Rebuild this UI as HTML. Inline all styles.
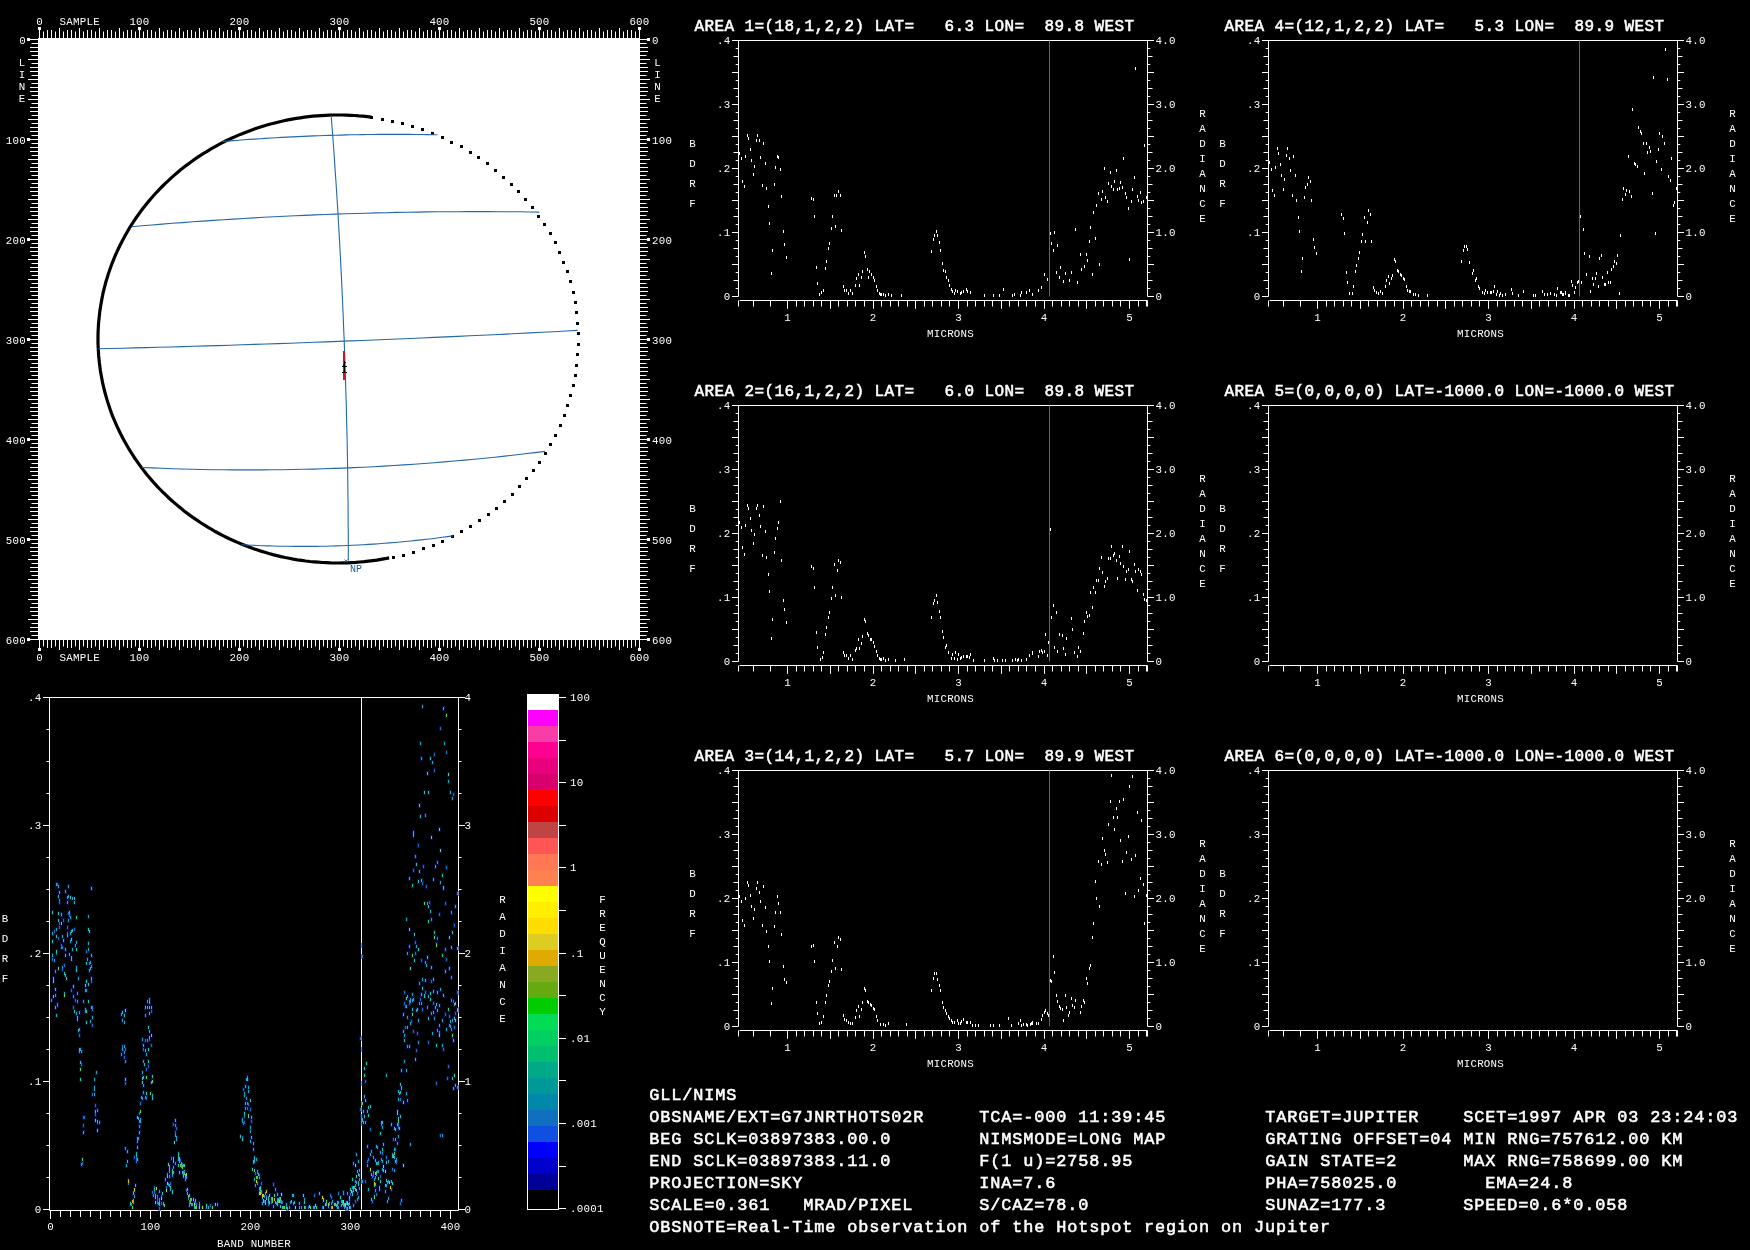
<!DOCTYPE html><html><head><meta charset="utf-8"><style>html,body{margin:0;padding:0;background:#000;overflow:hidden}
svg{display:block;will-change:transform}
text{font-family:"Liberation Mono",monospace;fill:#fff;white-space:pre}
.s{font-size:10.8px;letter-spacing:0.25px}
.np{font-size:10px}
.t{font-size:16px;letter-spacing:0.4px;stroke:#fff;stroke-width:0.55px}
.b{font-size:16.9px;letter-spacing:0.86px;stroke:#fff;stroke-width:0.55px}
</style></head><body>
<svg width="1750" height="1250" viewBox="0 0 1750 1250">
<rect width="1750" height="1250" fill="#000"/>
<rect x="38" y="38" width="602" height="602" fill="#fff"/>
<path d="M39.5 38V28 M39.5 640V650 M38 39.5H28 M640 39.5H650 M43.5 38V31.5 M43.5 640V646.5 M38 43.5H31.5 M640 43.5H646.5 M47.5 38V30 M47.5 640V648 M38 47.5H30 M640 47.5H648 M51.5 38V30 M51.5 640V648 M38 51.5H30 M640 51.5H648 M55.5 38V31.5 M55.5 640V646.5 M38 55.5H31.5 M640 55.5H646.5 M59.5 38V28 M59.5 640V650 M38 59.5H28 M640 59.5H650 M63.5 38V31.5 M63.5 640V646.5 M38 63.5H31.5 M640 63.5H646.5 M67.5 38V30 M67.5 640V648 M38 67.5H30 M640 67.5H648 M71.5 38V30 M71.5 640V648 M38 71.5H30 M640 71.5H648 M75.5 38V31.5 M75.5 640V646.5 M38 75.5H31.5 M640 75.5H646.5 M79.5 38V28 M79.5 640V650 M38 79.5H28 M640 79.5H650 M83.5 38V31.5 M83.5 640V646.5 M38 83.5H31.5 M640 83.5H646.5 M87.5 38V30 M87.5 640V648 M38 87.5H30 M640 87.5H648 M91.5 38V30 M91.5 640V648 M38 91.5H30 M640 91.5H648 M95.5 38V31.5 M95.5 640V646.5 M38 95.5H31.5 M640 95.5H646.5 M99.5 38V28 M99.5 640V650 M38 99.5H28 M640 99.5H650 M103.5 38V31.5 M103.5 640V646.5 M38 103.5H31.5 M640 103.5H646.5 M107.5 38V30 M107.5 640V648 M38 107.5H30 M640 107.5H648 M111.5 38V30 M111.5 640V648 M38 111.5H30 M640 111.5H648 M115.5 38V31.5 M115.5 640V646.5 M38 115.5H31.5 M640 115.5H646.5 M119.5 38V28 M119.5 640V650 M38 119.5H28 M640 119.5H650 M123.5 38V31.5 M123.5 640V646.5 M38 123.5H31.5 M640 123.5H646.5 M127.5 38V30 M127.5 640V648 M38 127.5H30 M640 127.5H648 M131.5 38V30 M131.5 640V648 M38 131.5H30 M640 131.5H648 M135.5 38V31.5 M135.5 640V646.5 M38 135.5H31.5 M640 135.5H646.5 M139.5 38V28 M139.5 640V650 M38 139.5H28 M640 139.5H650 M143.5 38V31.5 M143.5 640V646.5 M38 143.5H31.5 M640 143.5H646.5 M147.5 38V30 M147.5 640V648 M38 147.5H30 M640 147.5H648 M151.5 38V30 M151.5 640V648 M38 151.5H30 M640 151.5H648 M155.5 38V31.5 M155.5 640V646.5 M38 155.5H31.5 M640 155.5H646.5 M159.5 38V28 M159.5 640V650 M38 159.5H28 M640 159.5H650 M163.5 38V31.5 M163.5 640V646.5 M38 163.5H31.5 M640 163.5H646.5 M167.5 38V30 M167.5 640V648 M38 167.5H30 M640 167.5H648 M171.5 38V30 M171.5 640V648 M38 171.5H30 M640 171.5H648 M175.5 38V31.5 M175.5 640V646.5 M38 175.5H31.5 M640 175.5H646.5 M179.5 38V28 M179.5 640V650 M38 179.5H28 M640 179.5H650 M183.5 38V31.5 M183.5 640V646.5 M38 183.5H31.5 M640 183.5H646.5 M187.5 38V30 M187.5 640V648 M38 187.5H30 M640 187.5H648 M191.5 38V30 M191.5 640V648 M38 191.5H30 M640 191.5H648 M195.5 38V31.5 M195.5 640V646.5 M38 195.5H31.5 M640 195.5H646.5 M199.5 38V28 M199.5 640V650 M38 199.5H28 M640 199.5H650 M203.5 38V31.5 M203.5 640V646.5 M38 203.5H31.5 M640 203.5H646.5 M207.5 38V30 M207.5 640V648 M38 207.5H30 M640 207.5H648 M211.5 38V30 M211.5 640V648 M38 211.5H30 M640 211.5H648 M215.5 38V31.5 M215.5 640V646.5 M38 215.5H31.5 M640 215.5H646.5 M219.5 38V28 M219.5 640V650 M38 219.5H28 M640 219.5H650 M223.5 38V31.5 M223.5 640V646.5 M38 223.5H31.5 M640 223.5H646.5 M227.5 38V30 M227.5 640V648 M38 227.5H30 M640 227.5H648 M231.5 38V30 M231.5 640V648 M38 231.5H30 M640 231.5H648 M235.5 38V31.5 M235.5 640V646.5 M38 235.5H31.5 M640 235.5H646.5 M239.5 38V28 M239.5 640V650 M38 239.5H28 M640 239.5H650 M243.5 38V31.5 M243.5 640V646.5 M38 243.5H31.5 M640 243.5H646.5 M247.5 38V30 M247.5 640V648 M38 247.5H30 M640 247.5H648 M251.5 38V30 M251.5 640V648 M38 251.5H30 M640 251.5H648 M255.5 38V31.5 M255.5 640V646.5 M38 255.5H31.5 M640 255.5H646.5 M259.5 38V28 M259.5 640V650 M38 259.5H28 M640 259.5H650 M263.5 38V31.5 M263.5 640V646.5 M38 263.5H31.5 M640 263.5H646.5 M267.5 38V30 M267.5 640V648 M38 267.5H30 M640 267.5H648 M271.5 38V30 M271.5 640V648 M38 271.5H30 M640 271.5H648 M275.5 38V31.5 M275.5 640V646.5 M38 275.5H31.5 M640 275.5H646.5 M279.5 38V28 M279.5 640V650 M38 279.5H28 M640 279.5H650 M283.5 38V31.5 M283.5 640V646.5 M38 283.5H31.5 M640 283.5H646.5 M287.5 38V30 M287.5 640V648 M38 287.5H30 M640 287.5H648 M291.5 38V30 M291.5 640V648 M38 291.5H30 M640 291.5H648 M295.5 38V31.5 M295.5 640V646.5 M38 295.5H31.5 M640 295.5H646.5 M299.5 38V28 M299.5 640V650 M38 299.5H28 M640 299.5H650 M303.5 38V31.5 M303.5 640V646.5 M38 303.5H31.5 M640 303.5H646.5 M307.5 38V30 M307.5 640V648 M38 307.5H30 M640 307.5H648 M311.5 38V30 M311.5 640V648 M38 311.5H30 M640 311.5H648 M315.5 38V31.5 M315.5 640V646.5 M38 315.5H31.5 M640 315.5H646.5 M319.5 38V28 M319.5 640V650 M38 319.5H28 M640 319.5H650 M323.5 38V31.5 M323.5 640V646.5 M38 323.5H31.5 M640 323.5H646.5 M327.5 38V30 M327.5 640V648 M38 327.5H30 M640 327.5H648 M331.5 38V30 M331.5 640V648 M38 331.5H30 M640 331.5H648 M335.5 38V31.5 M335.5 640V646.5 M38 335.5H31.5 M640 335.5H646.5 M339.5 38V28 M339.5 640V650 M38 339.5H28 M640 339.5H650 M343.5 38V31.5 M343.5 640V646.5 M38 343.5H31.5 M640 343.5H646.5 M347.5 38V30 M347.5 640V648 M38 347.5H30 M640 347.5H648 M351.5 38V30 M351.5 640V648 M38 351.5H30 M640 351.5H648 M355.5 38V31.5 M355.5 640V646.5 M38 355.5H31.5 M640 355.5H646.5 M359.5 38V28 M359.5 640V650 M38 359.5H28 M640 359.5H650 M363.5 38V31.5 M363.5 640V646.5 M38 363.5H31.5 M640 363.5H646.5 M367.5 38V30 M367.5 640V648 M38 367.5H30 M640 367.5H648 M371.5 38V30 M371.5 640V648 M38 371.5H30 M640 371.5H648 M375.5 38V31.5 M375.5 640V646.5 M38 375.5H31.5 M640 375.5H646.5 M379.5 38V28 M379.5 640V650 M38 379.5H28 M640 379.5H650 M383.5 38V31.5 M383.5 640V646.5 M38 383.5H31.5 M640 383.5H646.5 M387.5 38V30 M387.5 640V648 M38 387.5H30 M640 387.5H648 M391.5 38V30 M391.5 640V648 M38 391.5H30 M640 391.5H648 M395.5 38V31.5 M395.5 640V646.5 M38 395.5H31.5 M640 395.5H646.5 M399.5 38V28 M399.5 640V650 M38 399.5H28 M640 399.5H650 M403.5 38V31.5 M403.5 640V646.5 M38 403.5H31.5 M640 403.5H646.5 M407.5 38V30 M407.5 640V648 M38 407.5H30 M640 407.5H648 M411.5 38V30 M411.5 640V648 M38 411.5H30 M640 411.5H648 M415.5 38V31.5 M415.5 640V646.5 M38 415.5H31.5 M640 415.5H646.5 M419.5 38V28 M419.5 640V650 M38 419.5H28 M640 419.5H650 M423.5 38V31.5 M423.5 640V646.5 M38 423.5H31.5 M640 423.5H646.5 M427.5 38V30 M427.5 640V648 M38 427.5H30 M640 427.5H648 M431.5 38V30 M431.5 640V648 M38 431.5H30 M640 431.5H648 M435.5 38V31.5 M435.5 640V646.5 M38 435.5H31.5 M640 435.5H646.5 M439.5 38V28 M439.5 640V650 M38 439.5H28 M640 439.5H650 M443.5 38V31.5 M443.5 640V646.5 M38 443.5H31.5 M640 443.5H646.5 M447.5 38V30 M447.5 640V648 M38 447.5H30 M640 447.5H648 M451.5 38V30 M451.5 640V648 M38 451.5H30 M640 451.5H648 M455.5 38V31.5 M455.5 640V646.5 M38 455.5H31.5 M640 455.5H646.5 M459.5 38V28 M459.5 640V650 M38 459.5H28 M640 459.5H650 M463.5 38V31.5 M463.5 640V646.5 M38 463.5H31.5 M640 463.5H646.5 M467.5 38V30 M467.5 640V648 M38 467.5H30 M640 467.5H648 M471.5 38V30 M471.5 640V648 M38 471.5H30 M640 471.5H648 M475.5 38V31.5 M475.5 640V646.5 M38 475.5H31.5 M640 475.5H646.5 M479.5 38V28 M479.5 640V650 M38 479.5H28 M640 479.5H650 M483.5 38V31.5 M483.5 640V646.5 M38 483.5H31.5 M640 483.5H646.5 M487.5 38V30 M487.5 640V648 M38 487.5H30 M640 487.5H648 M491.5 38V30 M491.5 640V648 M38 491.5H30 M640 491.5H648 M495.5 38V31.5 M495.5 640V646.5 M38 495.5H31.5 M640 495.5H646.5 M499.5 38V28 M499.5 640V650 M38 499.5H28 M640 499.5H650 M503.5 38V31.5 M503.5 640V646.5 M38 503.5H31.5 M640 503.5H646.5 M507.5 38V30 M507.5 640V648 M38 507.5H30 M640 507.5H648 M511.5 38V30 M511.5 640V648 M38 511.5H30 M640 511.5H648 M515.5 38V31.5 M515.5 640V646.5 M38 515.5H31.5 M640 515.5H646.5 M519.5 38V28 M519.5 640V650 M38 519.5H28 M640 519.5H650 M523.5 38V31.5 M523.5 640V646.5 M38 523.5H31.5 M640 523.5H646.5 M527.5 38V30 M527.5 640V648 M38 527.5H30 M640 527.5H648 M531.5 38V30 M531.5 640V648 M38 531.5H30 M640 531.5H648 M535.5 38V31.5 M535.5 640V646.5 M38 535.5H31.5 M640 535.5H646.5 M539.5 38V28 M539.5 640V650 M38 539.5H28 M640 539.5H650 M543.5 38V31.5 M543.5 640V646.5 M38 543.5H31.5 M640 543.5H646.5 M547.5 38V30 M547.5 640V648 M38 547.5H30 M640 547.5H648 M551.5 38V30 M551.5 640V648 M38 551.5H30 M640 551.5H648 M555.5 38V31.5 M555.5 640V646.5 M38 555.5H31.5 M640 555.5H646.5 M559.5 38V28 M559.5 640V650 M38 559.5H28 M640 559.5H650 M563.5 38V31.5 M563.5 640V646.5 M38 563.5H31.5 M640 563.5H646.5 M567.5 38V30 M567.5 640V648 M38 567.5H30 M640 567.5H648 M571.5 38V30 M571.5 640V648 M38 571.5H30 M640 571.5H648 M575.5 38V31.5 M575.5 640V646.5 M38 575.5H31.5 M640 575.5H646.5 M579.5 38V28 M579.5 640V650 M38 579.5H28 M640 579.5H650 M583.5 38V31.5 M583.5 640V646.5 M38 583.5H31.5 M640 583.5H646.5 M587.5 38V30 M587.5 640V648 M38 587.5H30 M640 587.5H648 M591.5 38V30 M591.5 640V648 M38 591.5H30 M640 591.5H648 M595.5 38V31.5 M595.5 640V646.5 M38 595.5H31.5 M640 595.5H646.5 M599.5 38V28 M599.5 640V650 M38 599.5H28 M640 599.5H650 M603.5 38V31.5 M603.5 640V646.5 M38 603.5H31.5 M640 603.5H646.5 M607.5 38V30 M607.5 640V648 M38 607.5H30 M640 607.5H648 M611.5 38V30 M611.5 640V648 M38 611.5H30 M640 611.5H648 M615.5 38V31.5 M615.5 640V646.5 M38 615.5H31.5 M640 615.5H646.5 M619.5 38V28 M619.5 640V650 M38 619.5H28 M640 619.5H650 M623.5 38V31.5 M623.5 640V646.5 M38 623.5H31.5 M640 623.5H646.5 M627.5 38V30 M627.5 640V648 M38 627.5H30 M640 627.5H648 M631.5 38V30 M631.5 640V648 M38 631.5H30 M640 631.5H648 M635.5 38V31.5 M635.5 640V646.5 M38 635.5H31.5 M640 635.5H646.5 M639.5 38V28 M639.5 640V650 M38 639.5H28 M640 639.5H650" stroke="#fff" stroke-width="1" fill="none"/>
<rect x="38" y="27" width="3" height="3" fill="#fff"/>
<rect x="38" y="648" width="3" height="3" fill="#fff"/>
<rect x="27" y="38" width="3" height="3" fill="#fff"/>
<rect x="647" y="38" width="3" height="3" fill="#fff"/>
<text x="39.5" y="25" class="s" text-anchor="middle">0</text>
<text x="39.5" y="661" class="s" text-anchor="middle">0</text>
<text x="26" y="44.0" class="s" text-anchor="end">0</text>
<text x="652" y="44.0" class="s">0</text>
<rect x="138" y="27" width="3" height="3" fill="#fff"/>
<rect x="138" y="648" width="3" height="3" fill="#fff"/>
<rect x="27" y="138" width="3" height="3" fill="#fff"/>
<rect x="647" y="138" width="3" height="3" fill="#fff"/>
<text x="139.5" y="25" class="s" text-anchor="middle">100</text>
<text x="139.5" y="661" class="s" text-anchor="middle">100</text>
<text x="26" y="144.0" class="s" text-anchor="end">100</text>
<text x="652" y="144.0" class="s">100</text>
<rect x="238" y="27" width="3" height="3" fill="#fff"/>
<rect x="238" y="648" width="3" height="3" fill="#fff"/>
<rect x="27" y="238" width="3" height="3" fill="#fff"/>
<rect x="647" y="238" width="3" height="3" fill="#fff"/>
<text x="239.5" y="25" class="s" text-anchor="middle">200</text>
<text x="239.5" y="661" class="s" text-anchor="middle">200</text>
<text x="26" y="244.0" class="s" text-anchor="end">200</text>
<text x="652" y="244.0" class="s">200</text>
<rect x="338" y="27" width="3" height="3" fill="#fff"/>
<rect x="338" y="648" width="3" height="3" fill="#fff"/>
<rect x="27" y="338" width="3" height="3" fill="#fff"/>
<rect x="647" y="338" width="3" height="3" fill="#fff"/>
<text x="339.5" y="25" class="s" text-anchor="middle">300</text>
<text x="339.5" y="661" class="s" text-anchor="middle">300</text>
<text x="26" y="344.0" class="s" text-anchor="end">300</text>
<text x="652" y="344.0" class="s">300</text>
<rect x="438" y="27" width="3" height="3" fill="#fff"/>
<rect x="438" y="648" width="3" height="3" fill="#fff"/>
<rect x="27" y="438" width="3" height="3" fill="#fff"/>
<rect x="647" y="438" width="3" height="3" fill="#fff"/>
<text x="439.5" y="25" class="s" text-anchor="middle">400</text>
<text x="439.5" y="661" class="s" text-anchor="middle">400</text>
<text x="26" y="444.0" class="s" text-anchor="end">400</text>
<text x="652" y="444.0" class="s">400</text>
<rect x="538" y="27" width="3" height="3" fill="#fff"/>
<rect x="538" y="648" width="3" height="3" fill="#fff"/>
<rect x="27" y="538" width="3" height="3" fill="#fff"/>
<rect x="647" y="538" width="3" height="3" fill="#fff"/>
<text x="539.5" y="25" class="s" text-anchor="middle">500</text>
<text x="539.5" y="661" class="s" text-anchor="middle">500</text>
<text x="26" y="544.0" class="s" text-anchor="end">500</text>
<text x="652" y="544.0" class="s">500</text>
<rect x="638" y="27" width="3" height="3" fill="#fff"/>
<rect x="638" y="648" width="3" height="3" fill="#fff"/>
<rect x="27" y="638" width="3" height="3" fill="#fff"/>
<rect x="647" y="638" width="3" height="3" fill="#fff"/>
<text x="639.5" y="25" class="s" text-anchor="middle">600</text>
<text x="639.5" y="661" class="s" text-anchor="middle">600</text>
<text x="26" y="644.0" class="s" text-anchor="end">600</text>
<text x="652" y="644.0" class="s">600</text>
<text x="59.5" y="25" class="s">SAMPLE</text>
<text x="59.5" y="661" class="s">SAMPLE</text>
<text x="22" y="66" class="s" text-anchor="middle">L</text>
<text x="657.5" y="66" class="s" text-anchor="middle">L</text>
<text x="22" y="78" class="s" text-anchor="middle">I</text>
<text x="657.5" y="78" class="s" text-anchor="middle">I</text>
<text x="22" y="90" class="s" text-anchor="middle">N</text>
<text x="657.5" y="90" class="s" text-anchor="middle">N</text>
<text x="22" y="102" class="s" text-anchor="middle">E</text>
<text x="657.5" y="102" class="s" text-anchor="middle">E</text>
<polyline points="371.4,117.2 367.2,116.7 363.1,116.2 358.9,115.9 354.7,115.5 350.5,115.3 346.3,115.1 342.1,115.0 337.9,115.0 333.8,115.0 329.6,115.1 325.4,115.3 321.2,115.6 317.0,115.9 312.8,116.2 308.7,116.7 304.5,117.2 300.4,117.8 296.2,118.4 292.1,119.1 288.0,119.9 283.9,120.8 279.8,121.7 275.7,122.7 271.7,123.7 267.7,124.8 263.7,126.0 259.7,127.3 255.7,128.6 251.8,129.9 247.9,131.4 244.0,132.9 240.2,134.4 236.4,136.1 232.6,137.8 228.8,139.5 225.1,141.3 221.4,143.2 217.8,145.1 214.2,147.1 210.6,149.2 207.1,151.3 203.6,153.4 200.1,155.7 196.7,157.9 193.3,160.3 190.0,162.7 186.7,165.1 183.5,167.6 180.3,170.1 177.2,172.7 174.1,175.4 171.0,178.1 168.1,180.8 165.1,183.6 162.2,186.5 159.4,189.4 156.6,192.3 153.9,195.3 151.3,198.3 148.6,201.4 146.1,204.5 143.6,207.6 141.2,210.8 138.8,214.1 136.5,217.3 134.2,220.6 132.1,224.0 129.9,227.3 127.9,230.8 125.9,234.2 124.0,237.7 122.1,241.2 120.3,244.7 118.6,248.3 116.9,251.9 115.3,255.5 113.8,259.1 112.3,262.8 110.9,266.5 109.6,270.2 108.3,274.0 107.2,277.7 106.0,281.5 105.0,285.3 104.0,289.1 103.1,292.9 102.3,296.8 101.6,300.6 100.9,304.5 100.3,308.3 99.7,312.2 99.3,316.1 98.9,320.0 98.5,323.9 98.3,327.8 98.1,331.7 98.0,335.7 98.0,339.6 98.0,343.5 98.2,347.4 98.4,351.3 98.6,355.2 99.0,359.1 99.4,363.0 99.9,366.9 100.4,370.8 101.1,374.7 101.8,378.5 102.5,382.4 103.4,386.2 104.3,390.0 105.3,393.8 106.4,397.6 107.5,401.4 108.7,405.1 110.0,408.9 111.3,412.6 112.7,416.3 114.2,419.9 115.8,423.6 117.4,427.2 119.1,430.8 120.8,434.3 122.6,437.8 124.5,441.3 126.5,444.8 128.5,448.2 130.6,451.6 132.7,455.0 134.9,458.3 137.2,461.6 139.5,464.9 141.9,468.1 144.3,471.3 146.8,474.4 149.4,477.5 152.0,480.6 154.7,483.6 157.4,486.6 160.2,489.5 163.1,492.4 166.0,495.2 168.9,498.0 171.9,500.7 175.0,503.4 178.1,506.0 181.2,508.6 184.4,511.2 187.7,513.6 191.0,516.1 194.3,518.4 197.7,520.7 201.1,523.0 204.6,525.2 208.1,527.4 211.7,529.4 215.2,531.5 218.9,533.5 222.5,535.4 226.2,537.2 229.9,539.0 233.7,540.7 237.5,542.4 241.3,544.0 245.2,545.6 249.1,547.1 253.0,548.5 256.9,549.8 260.9,551.1 264.9,552.3 268.9,553.5 272.9,554.6 276.9,555.6 281.0,556.6 285.1,557.5 289.2,558.3 293.3,559.1 297.4,559.8 301.6,560.4 305.7,561.0 309.9,561.5 314.1,561.9 318.2,562.2 322.4,562.5 326.6,562.7 330.8,562.9 335.0,563.0 339.2,563.0 343.4,562.9 347.6,562.8 351.8,562.6 355.9,562.4 360.1,562.0 364.3,561.7 368.5,561.2 372.6,560.7 376.8,560.1 380.9,559.4 385.0,558.7 389.1,557.9" fill="none" stroke="#000" stroke-width="3.2"/>
<rect x="370" y="116" width="3" height="3" fill="#000"/>
<rect x="381" y="118" width="3" height="3" fill="#000"/>
<rect x="391" y="120" width="3" height="3" fill="#000"/>
<rect x="401" y="122" width="3" height="3" fill="#000"/>
<rect x="411" y="125" width="3" height="3" fill="#000"/>
<rect x="421" y="128" width="3" height="3" fill="#000"/>
<rect x="431" y="132" width="3" height="3" fill="#000"/>
<rect x="441" y="136" width="3" height="3" fill="#000"/>
<rect x="450" y="141" width="3" height="3" fill="#000"/>
<rect x="460" y="145" width="3" height="3" fill="#000"/>
<rect x="469" y="151" width="3" height="3" fill="#000"/>
<rect x="477" y="156" width="3" height="3" fill="#000"/>
<rect x="486" y="162" width="3" height="3" fill="#000"/>
<rect x="494" y="169" width="3" height="3" fill="#000"/>
<rect x="502" y="176" width="3" height="3" fill="#000"/>
<rect x="510" y="183" width="3" height="3" fill="#000"/>
<rect x="517" y="190" width="3" height="3" fill="#000"/>
<rect x="524" y="198" width="3" height="3" fill="#000"/>
<rect x="531" y="206" width="3" height="3" fill="#000"/>
<rect x="537" y="215" width="3" height="3" fill="#000"/>
<rect x="543" y="223" width="3" height="3" fill="#000"/>
<rect x="549" y="232" width="3" height="3" fill="#000"/>
<rect x="554" y="241" width="3" height="3" fill="#000"/>
<rect x="558" y="251" width="3" height="3" fill="#000"/>
<rect x="562" y="261" width="3" height="3" fill="#000"/>
<rect x="566" y="270" width="3" height="3" fill="#000"/>
<rect x="569" y="280" width="3" height="3" fill="#000"/>
<rect x="572" y="291" width="3" height="3" fill="#000"/>
<rect x="574" y="301" width="3" height="3" fill="#000"/>
<rect x="575" y="311" width="3" height="3" fill="#000"/>
<rect x="576" y="322" width="3" height="3" fill="#000"/>
<rect x="577" y="332" width="3" height="3" fill="#000"/>
<rect x="577" y="343" width="3" height="3" fill="#000"/>
<rect x="576" y="353" width="3" height="3" fill="#000"/>
<rect x="575" y="364" width="3" height="3" fill="#000"/>
<rect x="574" y="374" width="3" height="3" fill="#000"/>
<rect x="572" y="384" width="3" height="3" fill="#000"/>
<rect x="569" y="394" width="3" height="3" fill="#000"/>
<rect x="566" y="404" width="3" height="3" fill="#000"/>
<rect x="563" y="414" width="3" height="3" fill="#000"/>
<rect x="559" y="424" width="3" height="3" fill="#000"/>
<rect x="554" y="434" width="3" height="3" fill="#000"/>
<rect x="549" y="443" width="3" height="3" fill="#000"/>
<rect x="544" y="452" width="3" height="3" fill="#000"/>
<rect x="538" y="461" width="3" height="3" fill="#000"/>
<rect x="532" y="469" width="3" height="3" fill="#000"/>
<rect x="525" y="477" width="3" height="3" fill="#000"/>
<rect x="518" y="485" width="3" height="3" fill="#000"/>
<rect x="511" y="493" width="3" height="3" fill="#000"/>
<rect x="503" y="500" width="3" height="3" fill="#000"/>
<rect x="495" y="507" width="3" height="3" fill="#000"/>
<rect x="487" y="513" width="3" height="3" fill="#000"/>
<rect x="478" y="519" width="3" height="3" fill="#000"/>
<rect x="469" y="525" width="3" height="3" fill="#000"/>
<rect x="460" y="530" width="3" height="3" fill="#000"/>
<rect x="451" y="535" width="3" height="3" fill="#000"/>
<rect x="441" y="540" width="3" height="3" fill="#000"/>
<rect x="432" y="544" width="3" height="3" fill="#000"/>
<rect x="422" y="547" width="3" height="3" fill="#000"/>
<rect x="412" y="551" width="3" height="3" fill="#000"/>
<rect x="402" y="554" width="3" height="3" fill="#000"/>
<rect x="392" y="556" width="3" height="3" fill="#000"/>
<polyline points="222.5,141.5 227.9,141.1 233.2,140.6 238.6,140.2 244.0,139.8 249.4,139.4 254.8,139.1 260.1,138.7 265.5,138.4 270.9,138.0 276.2,137.7 281.6,137.4 287.0,137.1 292.4,136.9 297.8,136.6 303.1,136.4 308.5,136.1 313.9,135.9 319.2,135.7 324.6,135.5 330.0,135.4 335.4,135.2 340.8,135.1 346.1,134.9 351.5,134.8 356.9,134.7 362.2,134.6 367.6,134.5 373.0,134.5 378.4,134.4 383.8,134.4 389.1,134.4 394.5,134.4 399.9,134.4 405.2,134.4 410.6,134.4 416.0,134.5 421.4,134.5 426.8,134.6 432.1,134.7 437.5,134.8" fill="none" stroke="#2468a8" stroke-width="1.1"/>
<polyline points="131.5,226.7 141.7,225.8 151.9,225.0 162.1,224.1 172.3,223.3 182.5,222.6 192.7,221.8 202.9,221.1 213.1,220.4 223.3,219.8 233.4,219.1 243.6,218.5 253.8,217.9 264.0,217.3 274.2,216.8 284.4,216.3 294.6,215.8 304.8,215.4 315.0,214.9 325.2,214.5 335.4,214.1 345.6,213.8 355.8,213.5 366.0,213.2 376.2,212.9 386.4,212.7 396.6,212.4 406.8,212.2 417.0,212.1 427.2,211.9 437.3,211.8 447.5,211.7 457.7,211.7 467.9,211.6 478.1,211.6 488.3,211.6 498.5,211.7 508.7,211.7 518.9,211.8 529.1,212.0 539.3,212.1" fill="none" stroke="#2468a8" stroke-width="1.1"/>
<polyline points="98.4,348.8 110.4,348.5 122.4,348.2 134.3,347.9 146.3,347.6 158.3,347.3 170.3,347.0 182.3,346.6 194.3,346.3 206.2,345.9 218.2,345.6 230.2,345.2 242.2,344.8 254.2,344.4 266.2,344.0 278.1,343.6 290.1,343.2 302.1,342.7 314.1,342.3 326.1,341.9 338.1,341.4 350.0,340.9 362.0,340.5 374.0,340.0 386.0,339.5 398.0,339.0 409.9,338.5 421.9,338.0 433.9,337.4 445.9,336.9 457.9,336.4 469.9,335.8 481.8,335.2 493.8,334.7 505.8,334.1 517.8,333.5 529.8,332.9 541.8,332.3 553.7,331.7 565.7,331.0 577.7,330.4" fill="none" stroke="#2468a8" stroke-width="1.1"/>
<polyline points="141.8,467.5 151.9,467.9 162.0,468.3 172.0,468.7 182.1,469.0 192.2,469.3 202.3,469.5 212.4,469.7 222.4,469.8 232.5,469.9 242.6,469.9 252.7,469.9 262.8,469.9 272.8,469.8 282.9,469.7 293.0,469.5 303.1,469.3 313.2,469.1 323.2,468.8 333.3,468.4 343.4,468.1 353.5,467.6 363.6,467.2 373.6,466.7 383.7,466.1 393.8,465.5 403.9,464.9 414.0,464.2 424.0,463.5 434.1,462.7 444.2,461.9 454.3,461.0 464.4,460.1 474.4,459.2 484.5,458.2 494.6,457.2 504.7,456.1 514.8,455.0 524.8,453.8 534.9,452.6 545.0,451.4" fill="none" stroke="#2468a8" stroke-width="1.1"/>
<polyline points="241.7,544.7 247.0,545.0 252.3,545.2 257.5,545.5 262.8,545.7 268.1,545.9 273.4,546.0 278.7,546.2 283.9,546.3 289.2,546.3 294.5,546.4 299.8,546.4 305.1,546.4 310.3,546.4 315.6,546.4 320.9,546.3 326.2,546.2 331.5,546.0 336.7,545.9 342.0,545.7 347.3,545.5 352.6,545.3 357.9,545.0 363.1,544.7 368.4,544.4 373.7,544.1 379.0,543.7 384.3,543.3 389.5,542.9 394.8,542.5 400.1,542.0 405.4,541.5 410.7,541.0 415.9,540.4 421.2,539.9 426.5,539.3 431.8,538.7 437.1,538.0 442.3,537.3 447.6,536.6 452.9,535.9" fill="none" stroke="#2468a8" stroke-width="1.1"/>
<polyline points="331.2,115.4 332.0,126.5 332.9,137.7 333.7,148.8 334.5,159.9 335.2,171.1 336.0,182.2 336.7,193.3 337.4,204.5 338.1,215.6 338.7,226.8 339.4,237.9 340.0,249.0 340.6,260.2 341.1,271.3 341.7,282.4 342.2,293.6 342.7,304.7 343.2,315.8 343.6,327.0 344.1,338.1 344.5,349.2 344.9,360.4 345.3,371.5 345.6,382.6 345.9,393.8 346.3,404.9 346.5,416.0 346.8,427.2 347.1,438.3 347.3,449.5 347.5,460.6 347.7,471.7 347.8,482.9 347.9,494.0 348.1,505.1 348.1,516.3 348.2,527.4 348.3,538.5 348.3,549.7 348.3,560.8" fill="none" stroke="#2468a8" stroke-width="1.1"/>
<text x="350" y="572" class="np" style="fill:#1f5a96">NP</text>
<path d="M344.5 559.5l3 3M347.5 559.5l-3 3" stroke="#1f5a96" stroke-width="0.8"/>
<rect x="343" y="351" width="2" height="29" fill="#b81c30"/>
<path d="M342 366.5h5M342 372.5h5M344.5 361v12M342.5 367l3-5" stroke="#000" stroke-width="1" fill="none"/>
<path d="M738.5 40.5V296.5 M1147.5 40.5V296.5 M732.0 40.5H1154.0 M738.5 40.5H732.0 M1147.5 40.5H1154.0 M738.5 48.5H735.7 M1147.5 48.5H1150.3 M738.5 56.5H733.5 M1147.5 56.5H1152.5 M738.5 64.5H735.7 M1147.5 64.5H1150.3 M738.5 72.5H732.0 M1147.5 72.5H1154.0 M738.5 80.5H735.7 M1147.5 80.5H1150.3 M738.5 88.5H733.5 M1147.5 88.5H1152.5 M738.5 96.5H735.7 M1147.5 96.5H1150.3 M738.5 104.5H732.0 M1147.5 104.5H1154.0 M738.5 112.5H735.7 M1147.5 112.5H1150.3 M738.5 120.5H733.5 M1147.5 120.5H1152.5 M738.5 128.5H735.7 M1147.5 128.5H1150.3 M738.5 136.5H732.0 M1147.5 136.5H1154.0 M738.5 144.5H735.7 M1147.5 144.5H1150.3 M738.5 152.5H733.5 M1147.5 152.5H1152.5 M738.5 160.5H735.7 M1147.5 160.5H1150.3 M738.5 168.5H732.0 M1147.5 168.5H1154.0 M738.5 176.5H735.7 M1147.5 176.5H1150.3 M738.5 184.5H733.5 M1147.5 184.5H1152.5 M738.5 192.5H735.7 M1147.5 192.5H1150.3 M738.5 200.5H732.0 M1147.5 200.5H1154.0 M738.5 208.5H735.7 M1147.5 208.5H1150.3 M738.5 216.5H733.5 M1147.5 216.5H1152.5 M738.5 224.5H735.7 M1147.5 224.5H1150.3 M738.5 232.5H732.0 M1147.5 232.5H1154.0 M738.5 240.5H735.7 M1147.5 240.5H1150.3 M738.5 248.5H733.5 M1147.5 248.5H1152.5 M738.5 256.5H735.7 M1147.5 256.5H1150.3 M738.5 264.5H732.0 M1147.5 264.5H1154.0 M738.5 272.5H735.7 M1147.5 272.5H1150.3 M738.5 280.5H733.5 M1147.5 280.5H1152.5 M738.5 288.5H735.7 M1147.5 288.5H1150.3 M738.5 296.5H732.0 M1147.5 296.5H1154.0 M739.5 300.5H1147.5 M738.5 300.5V306.5 M753.5 300.5V306.5 M770.5 300.5V306.5 M787.5 300.5V308.8 M796.5 300.5V306.5 M804.5 300.5V306.5 M813.5 300.5V306.5 M821.5 300.5V306.5 M830.5 300.5V308.8 M838.5 300.5V306.5 M847.5 300.5V306.5 M855.5 300.5V306.5 M864.5 300.5V306.5 M873.5 300.5V308.8 M881.5 300.5V306.5 M890.5 300.5V306.5 M898.5 300.5V306.5 M907.5 300.5V306.5 M915.5 300.5V308.8 M924.5 300.5V306.5 M932.5 300.5V306.5 M941.5 300.5V306.5 M949.5 300.5V306.5 M958.5 300.5V308.8 M967.5 300.5V306.5 M975.5 300.5V306.5 M984.5 300.5V306.5 M992.5 300.5V306.5 M1001.5 300.5V308.8 M1009.5 300.5V306.5 M1018.5 300.5V306.5 M1026.5 300.5V306.5 M1035.5 300.5V306.5 M1044.5 300.5V308.8 M1052.5 300.5V306.5 M1061.5 300.5V306.5 M1069.5 300.5V306.5 M1078.5 300.5V306.5 M1086.5 300.5V308.8 M1095.5 300.5V306.5 M1103.5 300.5V306.5 M1112.5 300.5V306.5 M1120.5 300.5V306.5 M1129.5 300.5V308.8 M1138.5 300.5V306.5 M1146.5 300.5V306.5 M1147.5 300.5V306.5" stroke="#fff" stroke-width="1" fill="none"/>
<text x="730.5" y="44.0" class="s" text-anchor="end">.4</text>
<text x="1155.5" y="44.0" class="s">4.0</text>
<text x="730.5" y="108.0" class="s" text-anchor="end">.3</text>
<text x="1155.5" y="108.0" class="s">3.0</text>
<text x="730.5" y="172.0" class="s" text-anchor="end">.2</text>
<text x="1155.5" y="172.0" class="s">2.0</text>
<text x="730.5" y="236.0" class="s" text-anchor="end">.1</text>
<text x="1155.5" y="236.0" class="s">1.0</text>
<text x="730.5" y="300.0" class="s" text-anchor="end">0</text>
<text x="1155.5" y="300.0" class="s">0</text>
<text x="787.5" y="320.5" class="s" text-anchor="middle">1</text>
<text x="873.0" y="320.5" class="s" text-anchor="middle">2</text>
<text x="958.5" y="320.5" class="s" text-anchor="middle">3</text>
<text x="1044.0" y="320.5" class="s" text-anchor="middle">4</text>
<text x="1129.5" y="320.5" class="s" text-anchor="middle">5</text>
<text x="950.5" y="336.5" class="s" text-anchor="middle">MICRONS</text>
<text x="694.5" y="30.5" class="t">AREA 1=(18,1,2,2) LAT=   6.3 LON=  89.8 WEST</text>
<text x="692.5" y="147.0" class="s" text-anchor="middle">B</text>
<text x="692.5" y="167.0" class="s" text-anchor="middle">D</text>
<text x="692.5" y="187.0" class="s" text-anchor="middle">R</text>
<text x="692.5" y="207.0" class="s" text-anchor="middle">F</text>
<text x="1202.5" y="117.0" class="s" text-anchor="middle">R</text>
<text x="1202.5" y="132.0" class="s" text-anchor="middle">A</text>
<text x="1202.5" y="147.0" class="s" text-anchor="middle">D</text>
<text x="1202.5" y="162.0" class="s" text-anchor="middle">I</text>
<text x="1202.5" y="177.0" class="s" text-anchor="middle">A</text>
<text x="1202.5" y="192.0" class="s" text-anchor="middle">N</text>
<text x="1202.5" y="207.0" class="s" text-anchor="middle">C</text>
<text x="1202.5" y="222.0" class="s" text-anchor="middle">E</text>
<line x1="1049.5" y1="40.5" x2="1049.5" y2="296.5" stroke="#666" stroke-width="1"/>
<path d="M738.5 405.5V661.5 M1147.5 405.5V661.5 M732.0 405.5H1154.0 M738.5 405.5H732.0 M1147.5 405.5H1154.0 M738.5 413.5H735.7 M1147.5 413.5H1150.3 M738.5 421.5H733.5 M1147.5 421.5H1152.5 M738.5 429.5H735.7 M1147.5 429.5H1150.3 M738.5 437.5H732.0 M1147.5 437.5H1154.0 M738.5 445.5H735.7 M1147.5 445.5H1150.3 M738.5 453.5H733.5 M1147.5 453.5H1152.5 M738.5 461.5H735.7 M1147.5 461.5H1150.3 M738.5 469.5H732.0 M1147.5 469.5H1154.0 M738.5 477.5H735.7 M1147.5 477.5H1150.3 M738.5 485.5H733.5 M1147.5 485.5H1152.5 M738.5 493.5H735.7 M1147.5 493.5H1150.3 M738.5 501.5H732.0 M1147.5 501.5H1154.0 M738.5 509.5H735.7 M1147.5 509.5H1150.3 M738.5 517.5H733.5 M1147.5 517.5H1152.5 M738.5 525.5H735.7 M1147.5 525.5H1150.3 M738.5 533.5H732.0 M1147.5 533.5H1154.0 M738.5 541.5H735.7 M1147.5 541.5H1150.3 M738.5 549.5H733.5 M1147.5 549.5H1152.5 M738.5 557.5H735.7 M1147.5 557.5H1150.3 M738.5 565.5H732.0 M1147.5 565.5H1154.0 M738.5 573.5H735.7 M1147.5 573.5H1150.3 M738.5 581.5H733.5 M1147.5 581.5H1152.5 M738.5 589.5H735.7 M1147.5 589.5H1150.3 M738.5 597.5H732.0 M1147.5 597.5H1154.0 M738.5 605.5H735.7 M1147.5 605.5H1150.3 M738.5 613.5H733.5 M1147.5 613.5H1152.5 M738.5 621.5H735.7 M1147.5 621.5H1150.3 M738.5 629.5H732.0 M1147.5 629.5H1154.0 M738.5 637.5H735.7 M1147.5 637.5H1150.3 M738.5 645.5H733.5 M1147.5 645.5H1152.5 M738.5 653.5H735.7 M1147.5 653.5H1150.3 M738.5 661.5H732.0 M1147.5 661.5H1154.0 M739.5 665.5H1147.5 M738.5 665.5V671.5 M753.5 665.5V671.5 M770.5 665.5V671.5 M787.5 665.5V673.8 M796.5 665.5V671.5 M804.5 665.5V671.5 M813.5 665.5V671.5 M821.5 665.5V671.5 M830.5 665.5V673.8 M838.5 665.5V671.5 M847.5 665.5V671.5 M855.5 665.5V671.5 M864.5 665.5V671.5 M873.5 665.5V673.8 M881.5 665.5V671.5 M890.5 665.5V671.5 M898.5 665.5V671.5 M907.5 665.5V671.5 M915.5 665.5V673.8 M924.5 665.5V671.5 M932.5 665.5V671.5 M941.5 665.5V671.5 M949.5 665.5V671.5 M958.5 665.5V673.8 M967.5 665.5V671.5 M975.5 665.5V671.5 M984.5 665.5V671.5 M992.5 665.5V671.5 M1001.5 665.5V673.8 M1009.5 665.5V671.5 M1018.5 665.5V671.5 M1026.5 665.5V671.5 M1035.5 665.5V671.5 M1044.5 665.5V673.8 M1052.5 665.5V671.5 M1061.5 665.5V671.5 M1069.5 665.5V671.5 M1078.5 665.5V671.5 M1086.5 665.5V673.8 M1095.5 665.5V671.5 M1103.5 665.5V671.5 M1112.5 665.5V671.5 M1120.5 665.5V671.5 M1129.5 665.5V673.8 M1138.5 665.5V671.5 M1146.5 665.5V671.5 M1147.5 665.5V671.5" stroke="#fff" stroke-width="1" fill="none"/>
<text x="730.5" y="409.0" class="s" text-anchor="end">.4</text>
<text x="1155.5" y="409.0" class="s">4.0</text>
<text x="730.5" y="473.0" class="s" text-anchor="end">.3</text>
<text x="1155.5" y="473.0" class="s">3.0</text>
<text x="730.5" y="537.0" class="s" text-anchor="end">.2</text>
<text x="1155.5" y="537.0" class="s">2.0</text>
<text x="730.5" y="601.0" class="s" text-anchor="end">.1</text>
<text x="1155.5" y="601.0" class="s">1.0</text>
<text x="730.5" y="665.0" class="s" text-anchor="end">0</text>
<text x="1155.5" y="665.0" class="s">0</text>
<text x="787.5" y="685.5" class="s" text-anchor="middle">1</text>
<text x="873.0" y="685.5" class="s" text-anchor="middle">2</text>
<text x="958.5" y="685.5" class="s" text-anchor="middle">3</text>
<text x="1044.0" y="685.5" class="s" text-anchor="middle">4</text>
<text x="1129.5" y="685.5" class="s" text-anchor="middle">5</text>
<text x="950.5" y="701.5" class="s" text-anchor="middle">MICRONS</text>
<text x="694.5" y="395.5" class="t">AREA 2=(16,1,2,2) LAT=   6.0 LON=  89.8 WEST</text>
<text x="692.5" y="512.0" class="s" text-anchor="middle">B</text>
<text x="692.5" y="532.0" class="s" text-anchor="middle">D</text>
<text x="692.5" y="552.0" class="s" text-anchor="middle">R</text>
<text x="692.5" y="572.0" class="s" text-anchor="middle">F</text>
<text x="1202.5" y="482.0" class="s" text-anchor="middle">R</text>
<text x="1202.5" y="497.0" class="s" text-anchor="middle">A</text>
<text x="1202.5" y="512.0" class="s" text-anchor="middle">D</text>
<text x="1202.5" y="527.0" class="s" text-anchor="middle">I</text>
<text x="1202.5" y="542.0" class="s" text-anchor="middle">A</text>
<text x="1202.5" y="557.0" class="s" text-anchor="middle">N</text>
<text x="1202.5" y="572.0" class="s" text-anchor="middle">C</text>
<text x="1202.5" y="587.0" class="s" text-anchor="middle">E</text>
<line x1="1049.5" y1="405.5" x2="1049.5" y2="661.5" stroke="#666" stroke-width="1"/>
<path d="M738.5 770.5V1026.5 M1147.5 770.5V1026.5 M732.0 770.5H1154.0 M738.5 770.5H732.0 M1147.5 770.5H1154.0 M738.5 778.5H735.7 M1147.5 778.5H1150.3 M738.5 786.5H733.5 M1147.5 786.5H1152.5 M738.5 794.5H735.7 M1147.5 794.5H1150.3 M738.5 802.5H732.0 M1147.5 802.5H1154.0 M738.5 810.5H735.7 M1147.5 810.5H1150.3 M738.5 818.5H733.5 M1147.5 818.5H1152.5 M738.5 826.5H735.7 M1147.5 826.5H1150.3 M738.5 834.5H732.0 M1147.5 834.5H1154.0 M738.5 842.5H735.7 M1147.5 842.5H1150.3 M738.5 850.5H733.5 M1147.5 850.5H1152.5 M738.5 858.5H735.7 M1147.5 858.5H1150.3 M738.5 866.5H732.0 M1147.5 866.5H1154.0 M738.5 874.5H735.7 M1147.5 874.5H1150.3 M738.5 882.5H733.5 M1147.5 882.5H1152.5 M738.5 890.5H735.7 M1147.5 890.5H1150.3 M738.5 898.5H732.0 M1147.5 898.5H1154.0 M738.5 906.5H735.7 M1147.5 906.5H1150.3 M738.5 914.5H733.5 M1147.5 914.5H1152.5 M738.5 922.5H735.7 M1147.5 922.5H1150.3 M738.5 930.5H732.0 M1147.5 930.5H1154.0 M738.5 938.5H735.7 M1147.5 938.5H1150.3 M738.5 946.5H733.5 M1147.5 946.5H1152.5 M738.5 954.5H735.7 M1147.5 954.5H1150.3 M738.5 962.5H732.0 M1147.5 962.5H1154.0 M738.5 970.5H735.7 M1147.5 970.5H1150.3 M738.5 978.5H733.5 M1147.5 978.5H1152.5 M738.5 986.5H735.7 M1147.5 986.5H1150.3 M738.5 994.5H732.0 M1147.5 994.5H1154.0 M738.5 1002.5H735.7 M1147.5 1002.5H1150.3 M738.5 1010.5H733.5 M1147.5 1010.5H1152.5 M738.5 1018.5H735.7 M1147.5 1018.5H1150.3 M738.5 1026.5H732.0 M1147.5 1026.5H1154.0 M739.5 1030.5H1147.5 M738.5 1030.5V1036.5 M753.5 1030.5V1036.5 M770.5 1030.5V1036.5 M787.5 1030.5V1038.8 M796.5 1030.5V1036.5 M804.5 1030.5V1036.5 M813.5 1030.5V1036.5 M821.5 1030.5V1036.5 M830.5 1030.5V1038.8 M838.5 1030.5V1036.5 M847.5 1030.5V1036.5 M855.5 1030.5V1036.5 M864.5 1030.5V1036.5 M873.5 1030.5V1038.8 M881.5 1030.5V1036.5 M890.5 1030.5V1036.5 M898.5 1030.5V1036.5 M907.5 1030.5V1036.5 M915.5 1030.5V1038.8 M924.5 1030.5V1036.5 M932.5 1030.5V1036.5 M941.5 1030.5V1036.5 M949.5 1030.5V1036.5 M958.5 1030.5V1038.8 M967.5 1030.5V1036.5 M975.5 1030.5V1036.5 M984.5 1030.5V1036.5 M992.5 1030.5V1036.5 M1001.5 1030.5V1038.8 M1009.5 1030.5V1036.5 M1018.5 1030.5V1036.5 M1026.5 1030.5V1036.5 M1035.5 1030.5V1036.5 M1044.5 1030.5V1038.8 M1052.5 1030.5V1036.5 M1061.5 1030.5V1036.5 M1069.5 1030.5V1036.5 M1078.5 1030.5V1036.5 M1086.5 1030.5V1038.8 M1095.5 1030.5V1036.5 M1103.5 1030.5V1036.5 M1112.5 1030.5V1036.5 M1120.5 1030.5V1036.5 M1129.5 1030.5V1038.8 M1138.5 1030.5V1036.5 M1146.5 1030.5V1036.5 M1147.5 1030.5V1036.5" stroke="#fff" stroke-width="1" fill="none"/>
<text x="730.5" y="774.0" class="s" text-anchor="end">.4</text>
<text x="1155.5" y="774.0" class="s">4.0</text>
<text x="730.5" y="838.0" class="s" text-anchor="end">.3</text>
<text x="1155.5" y="838.0" class="s">3.0</text>
<text x="730.5" y="902.0" class="s" text-anchor="end">.2</text>
<text x="1155.5" y="902.0" class="s">2.0</text>
<text x="730.5" y="966.0" class="s" text-anchor="end">.1</text>
<text x="1155.5" y="966.0" class="s">1.0</text>
<text x="730.5" y="1030.0" class="s" text-anchor="end">0</text>
<text x="1155.5" y="1030.0" class="s">0</text>
<text x="787.5" y="1050.5" class="s" text-anchor="middle">1</text>
<text x="873.0" y="1050.5" class="s" text-anchor="middle">2</text>
<text x="958.5" y="1050.5" class="s" text-anchor="middle">3</text>
<text x="1044.0" y="1050.5" class="s" text-anchor="middle">4</text>
<text x="1129.5" y="1050.5" class="s" text-anchor="middle">5</text>
<text x="950.5" y="1066.5" class="s" text-anchor="middle">MICRONS</text>
<text x="694.5" y="760.5" class="t">AREA 3=(14,1,2,2) LAT=   5.7 LON=  89.9 WEST</text>
<text x="692.5" y="877.0" class="s" text-anchor="middle">B</text>
<text x="692.5" y="897.0" class="s" text-anchor="middle">D</text>
<text x="692.5" y="917.0" class="s" text-anchor="middle">R</text>
<text x="692.5" y="937.0" class="s" text-anchor="middle">F</text>
<text x="1202.5" y="847.0" class="s" text-anchor="middle">R</text>
<text x="1202.5" y="862.0" class="s" text-anchor="middle">A</text>
<text x="1202.5" y="877.0" class="s" text-anchor="middle">D</text>
<text x="1202.5" y="892.0" class="s" text-anchor="middle">I</text>
<text x="1202.5" y="907.0" class="s" text-anchor="middle">A</text>
<text x="1202.5" y="922.0" class="s" text-anchor="middle">N</text>
<text x="1202.5" y="937.0" class="s" text-anchor="middle">C</text>
<text x="1202.5" y="952.0" class="s" text-anchor="middle">E</text>
<line x1="1049.5" y1="770.5" x2="1049.5" y2="1026.5" stroke="#666" stroke-width="1"/>
<path d="M1268.5 40.5V296.5 M1677.5 40.5V296.5 M1262.0 40.5H1684.0 M1268.5 40.5H1262.0 M1677.5 40.5H1684.0 M1268.5 48.5H1265.7 M1677.5 48.5H1680.3 M1268.5 56.5H1263.5 M1677.5 56.5H1682.5 M1268.5 64.5H1265.7 M1677.5 64.5H1680.3 M1268.5 72.5H1262.0 M1677.5 72.5H1684.0 M1268.5 80.5H1265.7 M1677.5 80.5H1680.3 M1268.5 88.5H1263.5 M1677.5 88.5H1682.5 M1268.5 96.5H1265.7 M1677.5 96.5H1680.3 M1268.5 104.5H1262.0 M1677.5 104.5H1684.0 M1268.5 112.5H1265.7 M1677.5 112.5H1680.3 M1268.5 120.5H1263.5 M1677.5 120.5H1682.5 M1268.5 128.5H1265.7 M1677.5 128.5H1680.3 M1268.5 136.5H1262.0 M1677.5 136.5H1684.0 M1268.5 144.5H1265.7 M1677.5 144.5H1680.3 M1268.5 152.5H1263.5 M1677.5 152.5H1682.5 M1268.5 160.5H1265.7 M1677.5 160.5H1680.3 M1268.5 168.5H1262.0 M1677.5 168.5H1684.0 M1268.5 176.5H1265.7 M1677.5 176.5H1680.3 M1268.5 184.5H1263.5 M1677.5 184.5H1682.5 M1268.5 192.5H1265.7 M1677.5 192.5H1680.3 M1268.5 200.5H1262.0 M1677.5 200.5H1684.0 M1268.5 208.5H1265.7 M1677.5 208.5H1680.3 M1268.5 216.5H1263.5 M1677.5 216.5H1682.5 M1268.5 224.5H1265.7 M1677.5 224.5H1680.3 M1268.5 232.5H1262.0 M1677.5 232.5H1684.0 M1268.5 240.5H1265.7 M1677.5 240.5H1680.3 M1268.5 248.5H1263.5 M1677.5 248.5H1682.5 M1268.5 256.5H1265.7 M1677.5 256.5H1680.3 M1268.5 264.5H1262.0 M1677.5 264.5H1684.0 M1268.5 272.5H1265.7 M1677.5 272.5H1680.3 M1268.5 280.5H1263.5 M1677.5 280.5H1682.5 M1268.5 288.5H1265.7 M1677.5 288.5H1680.3 M1268.5 296.5H1262.0 M1677.5 296.5H1684.0 M1269.5 300.5H1677.5 M1268.5 300.5V306.5 M1283.5 300.5V306.5 M1300.5 300.5V306.5 M1317.5 300.5V308.8 M1326.5 300.5V306.5 M1334.5 300.5V306.5 M1343.5 300.5V306.5 M1351.5 300.5V306.5 M1360.5 300.5V308.8 M1368.5 300.5V306.5 M1377.5 300.5V306.5 M1385.5 300.5V306.5 M1394.5 300.5V306.5 M1403.5 300.5V308.8 M1411.5 300.5V306.5 M1420.5 300.5V306.5 M1428.5 300.5V306.5 M1437.5 300.5V306.5 M1445.5 300.5V308.8 M1454.5 300.5V306.5 M1462.5 300.5V306.5 M1471.5 300.5V306.5 M1479.5 300.5V306.5 M1488.5 300.5V308.8 M1497.5 300.5V306.5 M1505.5 300.5V306.5 M1514.5 300.5V306.5 M1522.5 300.5V306.5 M1531.5 300.5V308.8 M1539.5 300.5V306.5 M1548.5 300.5V306.5 M1556.5 300.5V306.5 M1565.5 300.5V306.5 M1574.5 300.5V308.8 M1582.5 300.5V306.5 M1591.5 300.5V306.5 M1599.5 300.5V306.5 M1608.5 300.5V306.5 M1616.5 300.5V308.8 M1625.5 300.5V306.5 M1633.5 300.5V306.5 M1642.5 300.5V306.5 M1650.5 300.5V306.5 M1659.5 300.5V308.8 M1668.5 300.5V306.5 M1676.5 300.5V306.5 M1677.5 300.5V306.5" stroke="#fff" stroke-width="1" fill="none"/>
<text x="1260.5" y="44.0" class="s" text-anchor="end">.4</text>
<text x="1685.5" y="44.0" class="s">4.0</text>
<text x="1260.5" y="108.0" class="s" text-anchor="end">.3</text>
<text x="1685.5" y="108.0" class="s">3.0</text>
<text x="1260.5" y="172.0" class="s" text-anchor="end">.2</text>
<text x="1685.5" y="172.0" class="s">2.0</text>
<text x="1260.5" y="236.0" class="s" text-anchor="end">.1</text>
<text x="1685.5" y="236.0" class="s">1.0</text>
<text x="1260.5" y="300.0" class="s" text-anchor="end">0</text>
<text x="1685.5" y="300.0" class="s">0</text>
<text x="1317.5" y="320.5" class="s" text-anchor="middle">1</text>
<text x="1403.0" y="320.5" class="s" text-anchor="middle">2</text>
<text x="1488.5" y="320.5" class="s" text-anchor="middle">3</text>
<text x="1574.0" y="320.5" class="s" text-anchor="middle">4</text>
<text x="1659.5" y="320.5" class="s" text-anchor="middle">5</text>
<text x="1480.5" y="336.5" class="s" text-anchor="middle">MICRONS</text>
<text x="1224.5" y="30.5" class="t">AREA 4=(12,1,2,2) LAT=   5.3 LON=  89.9 WEST</text>
<text x="1222.5" y="147.0" class="s" text-anchor="middle">B</text>
<text x="1222.5" y="167.0" class="s" text-anchor="middle">D</text>
<text x="1222.5" y="187.0" class="s" text-anchor="middle">R</text>
<text x="1222.5" y="207.0" class="s" text-anchor="middle">F</text>
<text x="1732.5" y="117.0" class="s" text-anchor="middle">R</text>
<text x="1732.5" y="132.0" class="s" text-anchor="middle">A</text>
<text x="1732.5" y="147.0" class="s" text-anchor="middle">D</text>
<text x="1732.5" y="162.0" class="s" text-anchor="middle">I</text>
<text x="1732.5" y="177.0" class="s" text-anchor="middle">A</text>
<text x="1732.5" y="192.0" class="s" text-anchor="middle">N</text>
<text x="1732.5" y="207.0" class="s" text-anchor="middle">C</text>
<text x="1732.5" y="222.0" class="s" text-anchor="middle">E</text>
<line x1="1579.5" y1="40.5" x2="1579.5" y2="296.5" stroke="#666" stroke-width="1"/>
<path d="M1268.5 405.5V661.5 M1677.5 405.5V661.5 M1262.0 405.5H1684.0 M1268.5 405.5H1262.0 M1677.5 405.5H1684.0 M1268.5 413.5H1265.7 M1677.5 413.5H1680.3 M1268.5 421.5H1263.5 M1677.5 421.5H1682.5 M1268.5 429.5H1265.7 M1677.5 429.5H1680.3 M1268.5 437.5H1262.0 M1677.5 437.5H1684.0 M1268.5 445.5H1265.7 M1677.5 445.5H1680.3 M1268.5 453.5H1263.5 M1677.5 453.5H1682.5 M1268.5 461.5H1265.7 M1677.5 461.5H1680.3 M1268.5 469.5H1262.0 M1677.5 469.5H1684.0 M1268.5 477.5H1265.7 M1677.5 477.5H1680.3 M1268.5 485.5H1263.5 M1677.5 485.5H1682.5 M1268.5 493.5H1265.7 M1677.5 493.5H1680.3 M1268.5 501.5H1262.0 M1677.5 501.5H1684.0 M1268.5 509.5H1265.7 M1677.5 509.5H1680.3 M1268.5 517.5H1263.5 M1677.5 517.5H1682.5 M1268.5 525.5H1265.7 M1677.5 525.5H1680.3 M1268.5 533.5H1262.0 M1677.5 533.5H1684.0 M1268.5 541.5H1265.7 M1677.5 541.5H1680.3 M1268.5 549.5H1263.5 M1677.5 549.5H1682.5 M1268.5 557.5H1265.7 M1677.5 557.5H1680.3 M1268.5 565.5H1262.0 M1677.5 565.5H1684.0 M1268.5 573.5H1265.7 M1677.5 573.5H1680.3 M1268.5 581.5H1263.5 M1677.5 581.5H1682.5 M1268.5 589.5H1265.7 M1677.5 589.5H1680.3 M1268.5 597.5H1262.0 M1677.5 597.5H1684.0 M1268.5 605.5H1265.7 M1677.5 605.5H1680.3 M1268.5 613.5H1263.5 M1677.5 613.5H1682.5 M1268.5 621.5H1265.7 M1677.5 621.5H1680.3 M1268.5 629.5H1262.0 M1677.5 629.5H1684.0 M1268.5 637.5H1265.7 M1677.5 637.5H1680.3 M1268.5 645.5H1263.5 M1677.5 645.5H1682.5 M1268.5 653.5H1265.7 M1677.5 653.5H1680.3 M1268.5 661.5H1262.0 M1677.5 661.5H1684.0 M1269.5 665.5H1677.5 M1268.5 665.5V671.5 M1283.5 665.5V671.5 M1300.5 665.5V671.5 M1317.5 665.5V673.8 M1326.5 665.5V671.5 M1334.5 665.5V671.5 M1343.5 665.5V671.5 M1351.5 665.5V671.5 M1360.5 665.5V673.8 M1368.5 665.5V671.5 M1377.5 665.5V671.5 M1385.5 665.5V671.5 M1394.5 665.5V671.5 M1403.5 665.5V673.8 M1411.5 665.5V671.5 M1420.5 665.5V671.5 M1428.5 665.5V671.5 M1437.5 665.5V671.5 M1445.5 665.5V673.8 M1454.5 665.5V671.5 M1462.5 665.5V671.5 M1471.5 665.5V671.5 M1479.5 665.5V671.5 M1488.5 665.5V673.8 M1497.5 665.5V671.5 M1505.5 665.5V671.5 M1514.5 665.5V671.5 M1522.5 665.5V671.5 M1531.5 665.5V673.8 M1539.5 665.5V671.5 M1548.5 665.5V671.5 M1556.5 665.5V671.5 M1565.5 665.5V671.5 M1574.5 665.5V673.8 M1582.5 665.5V671.5 M1591.5 665.5V671.5 M1599.5 665.5V671.5 M1608.5 665.5V671.5 M1616.5 665.5V673.8 M1625.5 665.5V671.5 M1633.5 665.5V671.5 M1642.5 665.5V671.5 M1650.5 665.5V671.5 M1659.5 665.5V673.8 M1668.5 665.5V671.5 M1676.5 665.5V671.5 M1677.5 665.5V671.5" stroke="#fff" stroke-width="1" fill="none"/>
<text x="1260.5" y="409.0" class="s" text-anchor="end">.4</text>
<text x="1685.5" y="409.0" class="s">4.0</text>
<text x="1260.5" y="473.0" class="s" text-anchor="end">.3</text>
<text x="1685.5" y="473.0" class="s">3.0</text>
<text x="1260.5" y="537.0" class="s" text-anchor="end">.2</text>
<text x="1685.5" y="537.0" class="s">2.0</text>
<text x="1260.5" y="601.0" class="s" text-anchor="end">.1</text>
<text x="1685.5" y="601.0" class="s">1.0</text>
<text x="1260.5" y="665.0" class="s" text-anchor="end">0</text>
<text x="1685.5" y="665.0" class="s">0</text>
<text x="1317.5" y="685.5" class="s" text-anchor="middle">1</text>
<text x="1403.0" y="685.5" class="s" text-anchor="middle">2</text>
<text x="1488.5" y="685.5" class="s" text-anchor="middle">3</text>
<text x="1574.0" y="685.5" class="s" text-anchor="middle">4</text>
<text x="1659.5" y="685.5" class="s" text-anchor="middle">5</text>
<text x="1480.5" y="701.5" class="s" text-anchor="middle">MICRONS</text>
<text x="1224.5" y="395.5" class="t">AREA 5=(0,0,0,0) LAT=-1000.0 LON=-1000.0 WEST</text>
<text x="1222.5" y="512.0" class="s" text-anchor="middle">B</text>
<text x="1222.5" y="532.0" class="s" text-anchor="middle">D</text>
<text x="1222.5" y="552.0" class="s" text-anchor="middle">R</text>
<text x="1222.5" y="572.0" class="s" text-anchor="middle">F</text>
<text x="1732.5" y="482.0" class="s" text-anchor="middle">R</text>
<text x="1732.5" y="497.0" class="s" text-anchor="middle">A</text>
<text x="1732.5" y="512.0" class="s" text-anchor="middle">D</text>
<text x="1732.5" y="527.0" class="s" text-anchor="middle">I</text>
<text x="1732.5" y="542.0" class="s" text-anchor="middle">A</text>
<text x="1732.5" y="557.0" class="s" text-anchor="middle">N</text>
<text x="1732.5" y="572.0" class="s" text-anchor="middle">C</text>
<text x="1732.5" y="587.0" class="s" text-anchor="middle">E</text>
<path d="M1268.5 770.5V1026.5 M1677.5 770.5V1026.5 M1262.0 770.5H1684.0 M1268.5 770.5H1262.0 M1677.5 770.5H1684.0 M1268.5 778.5H1265.7 M1677.5 778.5H1680.3 M1268.5 786.5H1263.5 M1677.5 786.5H1682.5 M1268.5 794.5H1265.7 M1677.5 794.5H1680.3 M1268.5 802.5H1262.0 M1677.5 802.5H1684.0 M1268.5 810.5H1265.7 M1677.5 810.5H1680.3 M1268.5 818.5H1263.5 M1677.5 818.5H1682.5 M1268.5 826.5H1265.7 M1677.5 826.5H1680.3 M1268.5 834.5H1262.0 M1677.5 834.5H1684.0 M1268.5 842.5H1265.7 M1677.5 842.5H1680.3 M1268.5 850.5H1263.5 M1677.5 850.5H1682.5 M1268.5 858.5H1265.7 M1677.5 858.5H1680.3 M1268.5 866.5H1262.0 M1677.5 866.5H1684.0 M1268.5 874.5H1265.7 M1677.5 874.5H1680.3 M1268.5 882.5H1263.5 M1677.5 882.5H1682.5 M1268.5 890.5H1265.7 M1677.5 890.5H1680.3 M1268.5 898.5H1262.0 M1677.5 898.5H1684.0 M1268.5 906.5H1265.7 M1677.5 906.5H1680.3 M1268.5 914.5H1263.5 M1677.5 914.5H1682.5 M1268.5 922.5H1265.7 M1677.5 922.5H1680.3 M1268.5 930.5H1262.0 M1677.5 930.5H1684.0 M1268.5 938.5H1265.7 M1677.5 938.5H1680.3 M1268.5 946.5H1263.5 M1677.5 946.5H1682.5 M1268.5 954.5H1265.7 M1677.5 954.5H1680.3 M1268.5 962.5H1262.0 M1677.5 962.5H1684.0 M1268.5 970.5H1265.7 M1677.5 970.5H1680.3 M1268.5 978.5H1263.5 M1677.5 978.5H1682.5 M1268.5 986.5H1265.7 M1677.5 986.5H1680.3 M1268.5 994.5H1262.0 M1677.5 994.5H1684.0 M1268.5 1002.5H1265.7 M1677.5 1002.5H1680.3 M1268.5 1010.5H1263.5 M1677.5 1010.5H1682.5 M1268.5 1018.5H1265.7 M1677.5 1018.5H1680.3 M1268.5 1026.5H1262.0 M1677.5 1026.5H1684.0 M1269.5 1030.5H1677.5 M1268.5 1030.5V1036.5 M1283.5 1030.5V1036.5 M1300.5 1030.5V1036.5 M1317.5 1030.5V1038.8 M1326.5 1030.5V1036.5 M1334.5 1030.5V1036.5 M1343.5 1030.5V1036.5 M1351.5 1030.5V1036.5 M1360.5 1030.5V1038.8 M1368.5 1030.5V1036.5 M1377.5 1030.5V1036.5 M1385.5 1030.5V1036.5 M1394.5 1030.5V1036.5 M1403.5 1030.5V1038.8 M1411.5 1030.5V1036.5 M1420.5 1030.5V1036.5 M1428.5 1030.5V1036.5 M1437.5 1030.5V1036.5 M1445.5 1030.5V1038.8 M1454.5 1030.5V1036.5 M1462.5 1030.5V1036.5 M1471.5 1030.5V1036.5 M1479.5 1030.5V1036.5 M1488.5 1030.5V1038.8 M1497.5 1030.5V1036.5 M1505.5 1030.5V1036.5 M1514.5 1030.5V1036.5 M1522.5 1030.5V1036.5 M1531.5 1030.5V1038.8 M1539.5 1030.5V1036.5 M1548.5 1030.5V1036.5 M1556.5 1030.5V1036.5 M1565.5 1030.5V1036.5 M1574.5 1030.5V1038.8 M1582.5 1030.5V1036.5 M1591.5 1030.5V1036.5 M1599.5 1030.5V1036.5 M1608.5 1030.5V1036.5 M1616.5 1030.5V1038.8 M1625.5 1030.5V1036.5 M1633.5 1030.5V1036.5 M1642.5 1030.5V1036.5 M1650.5 1030.5V1036.5 M1659.5 1030.5V1038.8 M1668.5 1030.5V1036.5 M1676.5 1030.5V1036.5 M1677.5 1030.5V1036.5" stroke="#fff" stroke-width="1" fill="none"/>
<text x="1260.5" y="774.0" class="s" text-anchor="end">.4</text>
<text x="1685.5" y="774.0" class="s">4.0</text>
<text x="1260.5" y="838.0" class="s" text-anchor="end">.3</text>
<text x="1685.5" y="838.0" class="s">3.0</text>
<text x="1260.5" y="902.0" class="s" text-anchor="end">.2</text>
<text x="1685.5" y="902.0" class="s">2.0</text>
<text x="1260.5" y="966.0" class="s" text-anchor="end">.1</text>
<text x="1685.5" y="966.0" class="s">1.0</text>
<text x="1260.5" y="1030.0" class="s" text-anchor="end">0</text>
<text x="1685.5" y="1030.0" class="s">0</text>
<text x="1317.5" y="1050.5" class="s" text-anchor="middle">1</text>
<text x="1403.0" y="1050.5" class="s" text-anchor="middle">2</text>
<text x="1488.5" y="1050.5" class="s" text-anchor="middle">3</text>
<text x="1574.0" y="1050.5" class="s" text-anchor="middle">4</text>
<text x="1659.5" y="1050.5" class="s" text-anchor="middle">5</text>
<text x="1480.5" y="1066.5" class="s" text-anchor="middle">MICRONS</text>
<text x="1224.5" y="760.5" class="t">AREA 6=(0,0,0,0) LAT=-1000.0 LON=-1000.0 WEST</text>
<text x="1222.5" y="877.0" class="s" text-anchor="middle">B</text>
<text x="1222.5" y="897.0" class="s" text-anchor="middle">D</text>
<text x="1222.5" y="917.0" class="s" text-anchor="middle">R</text>
<text x="1222.5" y="937.0" class="s" text-anchor="middle">F</text>
<text x="1732.5" y="847.0" class="s" text-anchor="middle">R</text>
<text x="1732.5" y="862.0" class="s" text-anchor="middle">A</text>
<text x="1732.5" y="877.0" class="s" text-anchor="middle">D</text>
<text x="1732.5" y="892.0" class="s" text-anchor="middle">I</text>
<text x="1732.5" y="907.0" class="s" text-anchor="middle">A</text>
<text x="1732.5" y="922.0" class="s" text-anchor="middle">N</text>
<text x="1732.5" y="937.0" class="s" text-anchor="middle">C</text>
<text x="1732.5" y="952.0" class="s" text-anchor="middle">E</text>
<path d="M49.5 697.5V1210.5 M458.5 697.5V1210.5 M43.5 697.5H464.5 M49.5 1210.5H458.5 M49.5 697.5H43.0 M458.5 697.5H465.0 M49.5 729.5H46.5 M458.5 729.5H461.5 M49.5 761.5H46.5 M458.5 761.5H461.5 M49.5 793.5H46.5 M458.5 793.5H461.5 M49.5 825.5H43.0 M458.5 825.5H465.0 M49.5 857.5H46.5 M458.5 857.5H461.5 M49.5 889.5H46.5 M458.5 889.5H461.5 M49.5 921.5H46.5 M458.5 921.5H461.5 M49.5 953.5H43.0 M458.5 953.5H465.0 M49.5 985.5H46.5 M458.5 985.5H461.5 M49.5 1017.5H46.5 M458.5 1017.5H461.5 M49.5 1049.5H46.5 M458.5 1049.5H461.5 M49.5 1081.5H43.0 M458.5 1081.5H465.0 M49.5 1113.5H46.5 M458.5 1113.5H461.5 M49.5 1145.5H46.5 M458.5 1145.5H461.5 M49.5 1177.5H46.5 M458.5 1177.5H461.5 M49.5 1209.5H43.0 M458.5 1209.5H465.0 M50.5 1210.5V1219.0 M60.5 1210.5V1217.0 M70.5 1210.5V1217.0 M80.5 1210.5V1217.0 M90.5 1210.5V1217.0 M100.5 1210.5V1219.0 M110.5 1210.5V1217.0 M120.5 1210.5V1217.0 M130.5 1210.5V1217.0 M140.5 1210.5V1217.0 M150.5 1210.5V1219.0 M160.5 1210.5V1217.0 M170.5 1210.5V1217.0 M180.5 1210.5V1217.0 M190.5 1210.5V1217.0 M200.5 1210.5V1219.0 M210.5 1210.5V1217.0 M220.5 1210.5V1217.0 M230.5 1210.5V1217.0 M240.5 1210.5V1217.0 M250.5 1210.5V1219.0 M260.5 1210.5V1217.0 M270.5 1210.5V1217.0 M280.5 1210.5V1217.0 M290.5 1210.5V1217.0 M300.5 1210.5V1219.0 M310.5 1210.5V1217.0 M320.5 1210.5V1217.0 M330.5 1210.5V1217.0 M340.5 1210.5V1217.0 M350.5 1210.5V1219.0 M360.5 1210.5V1217.0 M370.5 1210.5V1217.0 M380.5 1210.5V1217.0 M390.5 1210.5V1217.0 M400.5 1210.5V1219.0 M410.5 1210.5V1217.0 M420.5 1210.5V1217.0 M430.5 1210.5V1217.0 M440.5 1210.5V1217.0 M450.5 1210.5V1219.0" stroke="#fff" stroke-width="1" fill="none"/>
<line x1="361.5" y1="697.5" x2="361.5" y2="1209.5" stroke="#fff" stroke-width="1"/>
<text x="41.5" y="701.0" class="s" text-anchor="end">.4</text>
<text x="464.5" y="701.0" class="s">4</text>
<text x="41.5" y="829.0" class="s" text-anchor="end">.3</text>
<text x="464.5" y="829.0" class="s">3</text>
<text x="41.5" y="957.0" class="s" text-anchor="end">.2</text>
<text x="464.5" y="957.0" class="s">2</text>
<text x="41.5" y="1085.0" class="s" text-anchor="end">.1</text>
<text x="464.5" y="1085.0" class="s">1</text>
<text x="41.5" y="1213.0" class="s" text-anchor="end">0</text>
<text x="464.5" y="1213.0" class="s">0</text>
<text x="50.5" y="1230" class="s" text-anchor="middle">0</text>
<text x="150.5" y="1230" class="s" text-anchor="middle">100</text>
<text x="250.5" y="1230" class="s" text-anchor="middle">200</text>
<text x="350.5" y="1230" class="s" text-anchor="middle">300</text>
<text x="450.5" y="1230" class="s" text-anchor="middle">400</text>
<text x="254" y="1247" class="s" text-anchor="middle">BAND NUMBER</text>
<text x="5" y="922" class="s" text-anchor="middle">B</text>
<text x="5" y="942" class="s" text-anchor="middle">D</text>
<text x="5" y="962" class="s" text-anchor="middle">R</text>
<text x="5" y="982" class="s" text-anchor="middle">F</text>
<text x="502.5" y="903" class="s" text-anchor="middle">R</text>
<text x="502.5" y="920" class="s" text-anchor="middle">A</text>
<text x="502.5" y="937" class="s" text-anchor="middle">D</text>
<text x="502.5" y="954" class="s" text-anchor="middle">I</text>
<text x="502.5" y="971" class="s" text-anchor="middle">A</text>
<text x="502.5" y="988" class="s" text-anchor="middle">N</text>
<text x="502.5" y="1005" class="s" text-anchor="middle">C</text>
<text x="502.5" y="1022" class="s" text-anchor="middle">E</text>
<text x="602.5" y="903.0" class="s" text-anchor="middle">F</text>
<text x="602.5" y="917.03" class="s" text-anchor="middle">R</text>
<text x="602.5" y="931.06" class="s" text-anchor="middle">E</text>
<text x="602.5" y="945.09" class="s" text-anchor="middle">Q</text>
<text x="602.5" y="959.12" class="s" text-anchor="middle">U</text>
<text x="602.5" y="973.15" class="s" text-anchor="middle">E</text>
<text x="602.5" y="987.18" class="s" text-anchor="middle">N</text>
<text x="602.5" y="1001.21" class="s" text-anchor="middle">C</text>
<text x="602.5" y="1015.24" class="s" text-anchor="middle">Y</text>
<g shape-rendering="crispEdges">
<rect x="528" y="694" width="31" height="16" fill="#ffffff"/>
<rect x="528" y="710" width="31" height="16" fill="#ff00ff"/>
<rect x="528" y="726" width="31" height="16" fill="#f83ca8"/>
<rect x="528" y="742" width="31" height="16" fill="#ff0090"/>
<rect x="528" y="758" width="31" height="16" fill="#e8007c"/>
<rect x="528" y="774" width="31" height="16" fill="#d8006c"/>
<rect x="528" y="790" width="31" height="16" fill="#ff0000"/>
<rect x="528" y="806" width="31" height="16" fill="#dd0000"/>
<rect x="528" y="822" width="31" height="16" fill="#c04444"/>
<rect x="528" y="838" width="31" height="16" fill="#ff5555"/>
<rect x="528" y="854" width="31" height="16" fill="#ff7755"/>
<rect x="528" y="870" width="31" height="16" fill="#ff8050"/>
<rect x="528" y="886" width="31" height="16" fill="#ffff00"/>
<rect x="528" y="902" width="31" height="16" fill="#ffee00"/>
<rect x="528" y="918" width="31" height="16" fill="#ffdd00"/>
<rect x="528" y="934" width="31" height="16" fill="#ddcc22"/>
<rect x="528" y="950" width="31" height="16" fill="#e0aa00"/>
<rect x="528" y="966" width="31" height="16" fill="#88aa22"/>
<rect x="528" y="982" width="31" height="16" fill="#66aa11"/>
<rect x="528" y="998" width="31" height="16" fill="#00cc00"/>
<rect x="528" y="1014" width="31" height="16" fill="#00dd55"/>
<rect x="528" y="1030" width="31" height="16" fill="#00d060"/>
<rect x="528" y="1046" width="31" height="16" fill="#00c070"/>
<rect x="528" y="1062" width="31" height="16" fill="#00aa88"/>
<rect x="528" y="1078" width="31" height="16" fill="#009999"/>
<rect x="528" y="1094" width="31" height="16" fill="#0088aa"/>
<rect x="528" y="1110" width="31" height="16" fill="#1070c0"/>
<rect x="528" y="1126" width="31" height="16" fill="#1050e0"/>
<rect x="528" y="1142" width="31" height="16" fill="#0000ff"/>
<rect x="528" y="1158" width="31" height="16" fill="#0000cc"/>
<rect x="528" y="1174" width="31" height="16" fill="#000099"/>
<rect x="528" y="1190" width="31" height="16" fill="#000000"/>
</g>
<rect x="527.5" y="694.5" width="31" height="515" fill="none" stroke="#fff" stroke-width="1"/>
<path d="M559 697.5H566 M559 740.5H566 M559 782.5H566 M559 825.5H566 M559 867.5H566 M559 910.5H566 M559 953.5H566 M559 995.5H566 M559 1038.5H566 M559 1080.5H566 M559 1123.5H566 M559 1166.5H566 M559 1208.5H566" stroke="#fff" stroke-width="1" fill="none"/>
<text x="570" y="701.0" class="s">100</text>
<text x="570" y="786.2" class="s">10</text>
<text x="570" y="871.4" class="s">1</text>
<text x="570" y="956.6" class="s">.1</text>
<text x="570" y="1041.8" class="s">.01</text>
<text x="570" y="1127.0" class="s">.001</text>
<text x="570" y="1212.2" class="s">.0001</text>
<text x="649.3" y="1100" class="b">GLL/NIMS</text>
<text x="649.3" y="1122" class="b">OBSNAME/EXT=G7JNRTHOTS02R</text>
<text x="979.3" y="1122" class="b">TCA=-000 11:39:45</text>
<text x="1265.3" y="1122" class="b">TARGET=JUPITER</text>
<text x="1463.3" y="1122" class="b">SCET=1997 APR 03 23:24:03</text>
<text x="649.3" y="1144" class="b">BEG SCLK=03897383.00.0</text>
<text x="979.3" y="1144" class="b">NIMSMODE=LONG MAP</text>
<text x="1265.3" y="1144" class="b">GRATING OFFSET=04</text>
<text x="1463.3" y="1144" class="b">MIN RNG=757612.00 KM</text>
<text x="649.3" y="1166" class="b">END SCLK=03897383.11.0</text>
<text x="979.3" y="1166" class="b">F(1 u)=2758.95</text>
<text x="1265.3" y="1166" class="b">GAIN STATE=2</text>
<text x="1463.3" y="1166" class="b">MAX RNG=758699.00 KM</text>
<text x="649.3" y="1188" class="b">PROJECTION=SKY</text>
<text x="979.3" y="1188" class="b">INA=7.6</text>
<text x="1265.3" y="1188" class="b">PHA=758025.0</text>
<text x="1463.3" y="1188" class="b">  EMA=24.8</text>
<text x="649.3" y="1210" class="b">SCALE=0.361   MRAD/PIXEL</text>
<text x="979.3" y="1210" class="b">S/CAZ=78.0</text>
<text x="1265.3" y="1210" class="b">SUNAZ=177.3</text>
<text x="1463.3" y="1210" class="b">SPEED=0.6*0.058</text>
<text x="649.3" y="1232" class="b">OBSNOTE=Real-Time observation of the Hotspot region on Jupiter</text>
<path d="M739.5 152v3 M741.5 157v3 M742.5 180v3 M744.5 185v3 M745.5 155v3 M747.5 134v3 M748.5 137v3 M750.5 148v3 M751.5 159v3 M753.5 173v3 M754.5 165v3 M756.5 139v3 M757.5 134v3 M759.5 139v3 M760.5 156v3 M762.5 184v3 M763.5 142v3 M765.5 162v3 M766.5 187v3 M768.5 205v3 M769.5 222v3 M771.5 272v3 M772.5 249v3 M774.5 183v3 M775.5 166v3 M777.5 155v3 M778.5 156v3 M780.5 168v3 M781.5 195v3 M783.5 230v3 M784.5 243v3 M786.5 256v3 M811.5 197v3 M813.5 198v3 M814.5 215v3 M816.5 266v3 M817.5 282v3 M819.5 293v3 M821.5 291v3 M823.5 289v3 M825.5 267v3 M826.5 260v3 M828.5 247v3 M829.5 242v3 M831.5 227v3 M832.5 215v3 M834.5 194v3 M835.5 225v3 M836.5 194v3 M838.5 190v3 M840.5 194v3 M841.5 229v3 M843.5 285v3 M844.5 289v3 M846.5 289v3 M848.5 292v3 M850.5 289v3 M852.5 292v3 M855.5 284v3 M856.5 277v3 M858.5 273v3 M859.5 284v3 M861.5 276v3 M862.5 270v3 M864.5 251v3 M865.5 255v3 M867.5 268v3 M868.5 276v3 M869.5 270v3 M871.5 273v3 M873.5 276v3 M874.5 279v3 M876.5 285v3 M877.5 289v3 M879.5 292v3 M881.5 293v3 M883.5 293v3" stroke="#fff" stroke-width="1" fill="none"/>
<path d="M880.5 293v3 M883.5 293v3 M885.5 294v3 M888.5 293v3 M891.5 294v3 M901.5 294v3 M931.5 250v3 M933.5 238v3 M934.5 234v3 M936.5 230v3 M937.5 234v3 M939.5 241v3 M940.5 249v3 M942.5 262v3 M943.5 269v3 M945.5 270v3 M946.5 276v3 M948.5 279v3 M949.5 284v3 M951.5 288v3 M952.5 290v3 M954.5 292v3 M955.5 289v3 M957.5 290v3 M960.5 292v3 M961.5 291v3 M963.5 290v3 M966.5 288v3 M967.5 290v3 M970.5 291v3 M984.5 294v3 M993.5 294v3 M999.5 294v3 M1003.5 288v3 M1012.5 294v3 M1014.5 293v3 M1020.5 294v3 M1021.5 291v3 M1026.5 291v3 M1029.5 289v3 M1032.5 293v3 M1038.5 289v3" stroke="#fff" stroke-width="1" fill="none"/>
<path d="M1032.5 293v3 M1038.5 289v3 M1041.5 286v3 M1044.5 273v3 M1047.5 278v3 M1050.5 232v3 M1051.5 242v3 M1053.5 249v3 M1054.5 231v3 M1056.5 271v3 M1057.5 244v3 M1059.5 276v3 M1060.5 266v3 M1063.5 280v3 M1065.5 272v3 M1069.5 279v3 M1071.5 271v3 M1075.5 228v3 M1077.5 281v3 M1080.5 253v3 M1081.5 268v3 M1084.5 265v3 M1086.5 253v3 M1087.5 259v3 M1089.5 240v3 M1090.5 226v3 M1092.5 273v3 M1093.5 211v3 M1095.5 237v3 M1096.5 204v3 M1098.5 192v3 M1099.5 263v3 M1101.5 198v3 M1102.5 190v3 M1104.5 167v3 M1105.5 196v3 M1107.5 200v3 M1108.5 182v3 M1110.5 171v3 M1111.5 185v3 M1113.5 188v3 M1114.5 180v3 M1116.5 169v3 M1117.5 188v3 M1119.5 187v3 M1120.5 181v3 M1122.5 186v3 M1123.5 157v3 M1125.5 192v3 M1126.5 196v3 M1128.5 207v3 M1129.5 258v3 M1131.5 200v3 M1132.5 188v3 M1134.5 176v3 M1135.5 67v3 M1137.5 195v3 M1138.5 199v3 M1140.5 191v3 M1141.5 201v3 M1143.5 200v3 M1144.5 144v3 M1146.5 196v3" stroke="#fff" stroke-width="1" fill="none"/>
<path d="M739.5 521v3 M741.5 526v3 M742.5 546v3 M744.5 553v3 M745.5 524v3 M747.5 504v3 M748.5 507v3 M750.5 517v3 M751.5 529v3 M753.5 542v3 M754.5 533v3 M756.5 507v3 M757.5 504v3 M759.5 514v3 M760.5 525v3 M762.5 554v3 M763.5 505v3 M765.5 530v3 M766.5 556v3 M768.5 573v3 M769.5 590v3 M771.5 637v3 M772.5 618v3 M774.5 551v3 M775.5 537v3 M777.5 527v3 M778.5 521v3 M780.5 500v3 M781.5 559v3 M783.5 599v3 M784.5 608v3 M786.5 621v3 M811.5 565v3 M813.5 567v3 M814.5 586v3 M816.5 631v3 M817.5 646v3 M820.5 658v3 M822.5 656v3 M823.5 651v3 M825.5 633v3 M826.5 626v3 M828.5 616v3 M829.5 611v3 M831.5 597v3 M832.5 586v3 M834.5 563v3 M835.5 594v3 M837.5 569v3 M838.5 559v3 M840.5 561v3 M841.5 596v3 M843.5 651v3 M844.5 654v3 M846.5 654v3 M848.5 657v3 M850.5 654v3 M852.5 658v3 M855.5 649v3 M856.5 647v3 M858.5 638v3 M859.5 647v3 M861.5 642v3 M862.5 635v3 M864.5 618v3 M865.5 620v3 M867.5 632v3 M868.5 634v3 M870.5 638v3 M871.5 638v3 M873.5 641v3 M874.5 645v3 M876.5 650v3 M877.5 654v3 M879.5 657v3 M881.5 658v3 M883.5 657v3" stroke="#fff" stroke-width="1" fill="none"/>
<path d="M880.5 658v3 M883.5 657v3 M885.5 659v3 M888.5 658v3 M895.5 659v3 M904.5 658v3 M931.5 616v3 M933.5 602v3 M934.5 599v3 M936.5 594v3 M937.5 601v3 M939.5 610v3 M940.5 616v3 M942.5 630v3 M943.5 636v3 M945.5 646v3 M946.5 644v3 M948.5 651v3 M952.5 653v3 M951.5 657v3 M954.5 657v3 M955.5 651v3 M957.5 658v3 M958.5 653v3 M960.5 657v3 M961.5 656v3 M963.5 655v3 M966.5 655v3 M967.5 655v3 M969.5 656v3 M970.5 653v3 M973.5 659v3 M984.5 659v3 M993.5 657v3 M994.5 659v3 M997.5 659v3 M1002.5 659v3 M1005.5 659v3 M1012.5 659v3 M1015.5 658v3 M1017.5 659v3 M1018.5 658v3 M1021.5 659v3 M1026.5 658v3 M1029.5 654v3 M1032.5 652v3 M1038.5 655v3 M1039.5 650v3" stroke="#fff" stroke-width="1" fill="none"/>
<path d="M1032.5 651v3 M1038.5 655v3 M1039.5 650v3 M1041.5 649v3 M1042.5 651v3 M1044.5 650v3 M1045.5 633v3 M1047.5 654v3 M1048.5 641v3 M1050.5 528v3 M1051.5 616v3 M1053.5 604v3 M1054.5 646v3 M1056.5 611v3 M1057.5 650v3 M1059.5 633v3 M1062.5 634v3 M1063.5 647v3 M1065.5 653v3 M1066.5 637v3 M1071.5 617v3 M1072.5 628v3 M1074.5 651v3 M1077.5 655v3 M1078.5 646v3 M1080.5 650v3 M1083.5 632v3 M1084.5 620v3 M1086.5 611v3 M1087.5 615v3 M1089.5 614v3 M1090.5 591v3 M1092.5 606v3 M1093.5 586v3 M1095.5 591v3 M1096.5 579v3 M1098.5 579v3 M1099.5 567v3 M1101.5 556v3 M1102.5 571v3 M1104.5 585v3 M1105.5 580v3 M1107.5 577v3 M1108.5 557v3 M1110.5 557v3 M1111.5 545v3 M1113.5 554v3 M1114.5 552v3 M1116.5 559v3 M1117.5 577v3 M1119.5 555v3 M1120.5 562v3 M1122.5 545v3 M1123.5 565v3 M1125.5 578v3 M1126.5 570v3 M1128.5 568v3 M1129.5 550v3 M1131.5 578v3 M1132.5 580v3 M1134.5 563v3 M1135.5 570v3 M1137.5 589v3 M1138.5 568v3 M1140.5 570v3 M1141.5 573v3 M1143.5 593v3 M1144.5 598v3 M1146.5 599v3" stroke="#fff" stroke-width="1" fill="none"/>
<path d="M739.5 895v3 M741.5 900v3 M742.5 919v3 M744.5 924v3 M745.5 897v3 M747.5 881v3 M748.5 884v3 M750.5 894v3 M751.5 905v3 M753.5 917v3 M754.5 908v3 M756.5 887v3 M757.5 881v3 M759.5 891v3 M760.5 900v3 M762.5 924v3 M763.5 885v3 M765.5 906v3 M766.5 930v3 M768.5 945v3 M769.5 960v3 M771.5 1002v3 M772.5 987v3 M774.5 925v3 M775.5 911v3 M777.5 895v3 M778.5 902v3 M780.5 911v3 M781.5 933v3 M783.5 965v3 M784.5 978v3 M786.5 981v3 M811.5 945v3 M813.5 944v3 M814.5 960v3 M816.5 1001v3 M817.5 1012v3 M819.5 1022v3 M821.5 1021v3 M823.5 1015v3 M825.5 1001v3 M826.5 994v3 M828.5 984v3 M829.5 980v3 M831.5 970v3 M832.5 959v3 M834.5 941v3 M835.5 967v3 M837.5 945v3 M838.5 936v3 M840.5 938v3 M841.5 968v3 M843.5 1014v3 M844.5 1018v3 M846.5 1019v3 M848.5 1021v3 M850.5 1022v3 M852.5 1022v3 M855.5 1016v3 M856.5 1009v3 M858.5 1005v3 M859.5 1015v3 M861.5 1008v3 M862.5 1001v3 M864.5 987v3 M865.5 989v3 M867.5 1000v3 M868.5 1001v3 M870.5 1003v3 M871.5 1004v3 M873.5 1007v3 M874.5 1008v3 M876.5 1015v3 M877.5 1019v3 M880.5 1023v3 M883.5 1023v3" stroke="#fff" stroke-width="1" fill="none"/>
<path d="M880.5 1023v3 M883.5 1023v3 M885.5 1024v3 M888.5 1022v3 M906.5 1023v3 M931.5 989v3 M933.5 977v3 M934.5 972v3 M936.5 972v3 M937.5 978v3 M939.5 984v3 M940.5 989v3 M942.5 1001v3 M943.5 1006v3 M945.5 1009v3 M946.5 1012v3 M948.5 1015v3 M949.5 1017v3 M951.5 1019v3 M952.5 1021v3 M954.5 1021v3 M957.5 1019v3 M958.5 1022v3 M960.5 1022v3 M961.5 1020v3 M963.5 1018v3 M966.5 1021v3 M967.5 1021v3 M970.5 1021v3 M972.5 1024v3 M975.5 1024v3 M978.5 1024v3 M990.5 1024v3 M993.5 1024v3 M999.5 1024v3 M1008.5 1017v3 M1011.5 1024v3 M1018.5 1022v3 M1020.5 1019v3 M1021.5 1024v3 M1023.5 1023v3 M1026.5 1023v3 M1027.5 1024v3 M1030.5 1023v3 M1032.5 1022v3 M1036.5 1022v3 M1038.5 1022v3" stroke="#fff" stroke-width="1" fill="none"/>
<path d="M1031.5 1022v3 M1032.5 1021v3 M1036.5 1022v3 M1038.5 1022v3 M1041.5 1018v3 M1042.5 1014v3 M1044.5 1011v3 M1045.5 1009v3 M1047.5 1012v3 M1048.5 1014v3 M1050.5 979v3 M1051.5 980v3 M1053.5 955v3 M1054.5 971v3 M1056.5 994v3 M1057.5 1000v3 M1059.5 1005v3 M1060.5 1007v3 M1062.5 1008v3 M1063.5 1019v3 M1065.5 994v3 M1066.5 1006v3 M1068.5 1014v3 M1069.5 1011v3 M1071.5 997v3 M1072.5 1004v3 M1074.5 1006v3 M1075.5 999v3 M1080.5 1011v3 M1081.5 1005v3 M1083.5 999v3 M1084.5 1001v3 M1086.5 977v3 M1087.5 982v3 M1089.5 967v3 M1090.5 964v3 M1092.5 936v3 M1093.5 922v3 M1095.5 880v3 M1096.5 897v3 M1098.5 860v3 M1099.5 905v3 M1101.5 863v3 M1102.5 837v3 M1104.5 849v3 M1105.5 853v3 M1107.5 861v3 M1108.5 823v3 M1110.5 800v3 M1111.5 774v3 M1113.5 816v3 M1114.5 828v3 M1116.5 807v3 M1117.5 816v3 M1119.5 800v3 M1120.5 839v3 M1122.5 860v3 M1123.5 798v3 M1125.5 892v3 M1126.5 851v3 M1128.5 835v3 M1129.5 785v3 M1131.5 858v3 M1132.5 775v3 M1134.5 895v3 M1135.5 854v3 M1137.5 811v3 M1138.5 889v3 M1140.5 877v3 M1141.5 819v3 M1143.5 883v3 M1144.5 922v3 M1146.5 894v3" stroke="#fff" stroke-width="1" fill="none"/>
<path d="M1269.5 161v3 M1271.5 168v3 M1272.5 189v3 M1274.5 194v3 M1275.5 166v3 M1277.5 147v3 M1278.5 152v3 M1280.5 163v3 M1281.5 174v3 M1283.5 188v3 M1284.5 178v3 M1286.5 154v3 M1287.5 147v3 M1289.5 157v3 M1290.5 169v3 M1292.5 194v3 M1293.5 155v3 M1295.5 174v3 M1296.5 199v3 M1298.5 216v3 M1299.5 230v3 M1301.5 270v3 M1302.5 257v3 M1304.5 196v3 M1305.5 186v3 M1307.5 183v3 M1308.5 176v3 M1310.5 180v3 M1311.5 199v3 M1313.5 238v3 M1314.5 246v3 M1316.5 252v3 M1341.5 213v3 M1343.5 217v3 M1344.5 232v3 M1346.5 271v3 M1347.5 281v3 M1349.5 292v3 M1352.5 292v3 M1353.5 285v3 M1355.5 270v3 M1356.5 264v3 M1358.5 257v3 M1359.5 251v3 M1361.5 240v3 M1362.5 233v3 M1364.5 216v3 M1365.5 240v3 M1367.5 221v3 M1368.5 209v3 M1370.5 213v3 M1371.5 240v3 M1373.5 286v3 M1374.5 289v3 M1376.5 291v3 M1378.5 292v3 M1380.5 290v3 M1382.5 292v3 M1385.5 285v3 M1386.5 279v3 M1388.5 275v3 M1389.5 282v3 M1391.5 277v3 M1392.5 274v3 M1394.5 258v3 M1395.5 260v3 M1397.5 269v3 M1398.5 270v3 M1400.5 273v3 M1401.5 274v3 M1403.5 277v3 M1404.5 278v3 M1406.5 285v3 M1407.5 289v3 M1409.5 290v3 M1413.5 293v3" stroke="#fff" stroke-width="1" fill="none"/>
<path d="M1410.5 290v3 M1413.5 293v3 M1415.5 293v3 M1418.5 294v3 M1427.5 294v3 M1461.5 260v3 M1463.5 249v3 M1464.5 245v3 M1466.5 245v3 M1467.5 248v3 M1469.5 261v3 M1472.5 272v3 M1473.5 269v3 M1475.5 279v3 M1476.5 277v3 M1478.5 285v3 M1479.5 287v3 M1482.5 291v3 M1484.5 292v3 M1485.5 289v3 M1487.5 291v3 M1490.5 291v3 M1491.5 291v3 M1493.5 290v3 M1494.5 285v3 M1496.5 293v3 M1497.5 290v3 M1499.5 294v3 M1500.5 292v3 M1502.5 294v3 M1505.5 293v3 M1511.5 288v3 M1512.5 292v3 M1518.5 294v3 M1523.5 290v3 M1533.5 294v3 M1535.5 294v3 M1542.5 290v3 M1544.5 293v3 M1547.5 293v3 M1550.5 292v3 M1554.5 293v3 M1556.5 294v3 M1557.5 287v3 M1560.5 291v3 M1562.5 293v3 M1565.5 291v3 M1568.5 294v3" stroke="#fff" stroke-width="1" fill="none"/>
<path d="M1561.5 291v3 M1563.5 293v3 M1565.5 292v3 M1569.5 294v3 M1571.5 280v3 M1572.5 284v3 M1574.5 291v3 M1575.5 286v3 M1577.5 281v3 M1578.5 280v3 M1580.5 215v3 M1581.5 281v3 M1583.5 228v3 M1584.5 252v3 M1586.5 273v3 M1589.5 255v3 M1590.5 290v3 M1592.5 277v3 M1593.5 283v3 M1595.5 277v3 M1596.5 272v3 M1598.5 285v3 M1599.5 257v3 M1601.5 254v3 M1602.5 276v3 M1604.5 283v3 M1605.5 283v3 M1607.5 271v3 M1608.5 281v3 M1610.5 281v3 M1611.5 268v3 M1613.5 265v3 M1614.5 260v3 M1616.5 262v3 M1617.5 254v3 M1619.5 292v3 M1620.5 234v3 M1622.5 198v3 M1623.5 187v3 M1625.5 193v3 M1626.5 189v3 M1628.5 155v3 M1629.5 190v3 M1631.5 195v3 M1632.5 108v3 M1634.5 162v3 M1635.5 163v3 M1637.5 165v3 M1638.5 126v3 M1640.5 130v3 M1641.5 132v3 M1643.5 142v3 M1644.5 172v3 M1646.5 142v3 M1647.5 151v3 M1649.5 146v3 M1650.5 150v3 M1652.5 192v3 M1653.5 76v3 M1655.5 232v3 M1656.5 160v3 M1658.5 148v3 M1659.5 132v3 M1661.5 168v3 M1662.5 135v3 M1664.5 142v3 M1665.5 48v3 M1667.5 78v3 M1668.5 175v3 M1670.5 179v3 M1671.5 157v3 M1673.5 204v3 M1674.5 201v3 M1676.5 187v3" stroke="#fff" stroke-width="1" fill="none"/>
<path d="M51 931h3v5h-3z M53 929h3v5h-3z M52 976h3v5h-3z M54 987h3v5h-3z M55 927h3v5h-3z M57 884h3v5h-3z M55 882h3v5h-3z M58 890h3v5h-3z M56 882h3v5h-3z M60 912h3v5h-3z M62 918h3v5h-3z M61 934h3v5h-3z M63 963h3v5h-3z M64 947h3v5h-3z M66 895h3v5h-3z M64 889h3v5h-3z M67 884h3v5h-3z M69 895h3v5h-3z M70 929h3v5h-3z M72 984h3v5h-3z M70 988h3v5h-3z M73 900h3v5h-3z M75 915h3v5h-3z M75 940h3v5h-3z M76 991h3v5h-3z M74 998h3v5h-3z M78 1027h3v5h-3z M79 1060h3v5h-3z M81 1161h3v5h-3z M80 1162h3v5h-3z M82 1115h3v5h-3z M83 1115h3v5h-3z M84 983h3v5h-3z M82 999h3v5h-3z M85 949h3v5h-3z M86 957h3v5h-3z M87 927h3v5h-3z M88 929h3v5h-3z M87 914h3v5h-3z M90 953h3v5h-3z M91 1007h3v5h-3z M90 1005h3v5h-3z M93 1077h3v5h-3z M95 1070h3v5h-3z M94 1103h3v5h-3z M96 1128h3v5h-3z M121 1010h3v5h-3z M123 1013h3v5h-3z M124 1008h3v5h-3z M124 1047h3v5h-3z M126 1149h3v5h-3z M124 1146h3v5h-3z M127 1181h3v5h-3z M129 1202h3v5h-3z M131 1199h3v5h-3z M133 1194h3v5h-3z M132 1190h3v5h-3z M135 1151h3v5h-3z M136 1136h3v5h-3z M138 1111h3v5h-3z M139 1101h3v5h-3z M141 1070h3v5h-3z M142 1047h3v5h-3z M141 1037h3v5h-3z M144 1005h3v5h-3z M146 999h3v5h-3z M145 1067h3v5h-3z M147 1064h3v5h-3z M146 1005h3v5h-3z M148 1000h3v5h-3z M148 997h3v5h-3z M150 1005h3v5h-3z M151 1074h3v5h-3z M153 1187h3v5h-3z M154 1194h3v5h-3z M156 1200h3v5h-3z M156 1194h3v5h-3z M158 1197h3v5h-3z M158 1200h3v5h-3z M157 1201h3v5h-3z M160 1194h3v5h-3z M158 1189h3v5h-3z M162 1202h3v5h-3z M165 1185h3v5h-3z M166 1172h3v5h-3z M168 1169h3v5h-3z M168 1164h3v5h-3z M169 1185h3v5h-3z M171 1190h3v5h-3z M171 1168h3v5h-3z M172 1156h3v5h-3z M174 1118h3v5h-3z M175 1126h3v5h-3z M177 1153h3v5h-3z M178 1170h3v5h-3z M179 1158h3v5h-3z M181 1164h3v5h-3z M180 1161h3v5h-3z M183 1170h3v5h-3z M182 1173h3v5h-3z M184 1176h3v5h-3z M185 1175h3v5h-3z M186 1187h3v5h-3z M185 1188h3v5h-3z M187 1194h3v5h-3z M189 1200h3v5h-3z M191 1202h3v5h-3z M193 1205h3v5h-3z M193 1202h3v5h-3z M192 1197h3v5h-3z M190 1202h3v5h-3z M188 1203h3v5h-3z M193 1202h3v5h-3z M195 1205h3v5h-3z M198 1203h3v5h-3z M201 1205h3v5h-3z M211 1205h3v5h-3z M209 1203h3v5h-3z M241 1117h3v5h-3z M243 1120h3v5h-3z M243 1093h3v5h-3z M245 1096h3v5h-3z M244 1084h3v5h-3z M246 1077h3v5h-3z M244 1084h3v5h-3z M247 1085h3v5h-3z M249 1098h3v5h-3z M250 1115h3v5h-3z M252 1141h3v5h-3z M253 1155h3v5h-3z M255 1157h3v5h-3z M256 1169h3v5h-3z M258 1175h3v5h-3z M257 1172h3v5h-3z M259 1185h3v5h-3z M260 1181h3v5h-3z M261 1193h3v5h-3z M262 1198h3v5h-3z M264 1201h3v5h-3z M263 1199h3v5h-3z M265 1196h3v5h-3z M263 1194h3v5h-3z M267 1197h3v5h-3z M270 1200h3v5h-3z M272 1204h3v5h-3z M271 1199h3v5h-3z M273 1197h3v5h-3z M276 1192h3v5h-3z M277 1197h3v5h-3z M275 1201h3v5h-3z M280 1199h3v5h-3z M279 1196h3v5h-3z M294 1205h3v5h-3z M293 1200h3v5h-3z M303 1205h3v5h-3z M309 1205h3v5h-3z M313 1193h3v5h-3z M322 1205h3v5h-3z M324 1202h3v5h-3z M322 1198h3v5h-3z M330 1205h3v5h-3z M331 1199h3v5h-3z M329 1193h3v5h-3z M336 1200h3v5h-3z M339 1195h3v5h-3z M342 1203h3v5h-3z M344 1202h3v5h-3z M348 1195h3v5h-3z M346 1191h3v5h-3z M342 1202h3v5h-3z M344 1203h3v5h-3z M348 1195h3v5h-3z M349 1192h3v5h-3z M351 1190h3v5h-3z M354 1163h3v5h-3z M352 1161h3v5h-3z M357 1172h3v5h-3z M358 1173h3v5h-3z M360 1081h3v5h-3z M361 1101h3v5h-3z M359 1107h3v5h-3z M363 1114h3v5h-3z M364 1079h3v5h-3z M366 1159h3v5h-3z M367 1105h3v5h-3z M369 1104h3v5h-3z M369 1168h3v5h-3z M370 1149h3v5h-3z M373 1177h3v5h-3z M374 1175h3v5h-3z M375 1161h3v5h-3z M374 1158h3v5h-3z M379 1174h3v5h-3z M377 1176h3v5h-3z M381 1159h3v5h-3z M380 1157h3v5h-3z M385 1073h3v5h-3z M387 1179h3v5h-3z M385 1178h3v5h-3z M390 1122h3v5h-3z M391 1154h3v5h-3z M394 1147h3v5h-3z M396 1122h3v5h-3z M397 1119h3v5h-3z M397 1134h3v5h-3z M399 1097h3v5h-3z M397 1097h3v5h-3z M400 1068h3v5h-3z M402 1163h3v5h-3z M403 1038h3v5h-3z M405 1091h3v5h-3z M406 1098h3v5h-3z M406 1025h3v5h-3z M408 1001h3v5h-3z M409 999h3v5h-3z M409 1142h3v5h-3z M411 1012h3v5h-3z M410 1019h3v5h-3z M412 997h3v5h-3z M411 992h3v5h-3z M414 951h3v5h-3z M413 958h3v5h-3z M415 1008h3v5h-3z M417 1018h3v5h-3z M418 981h3v5h-3z M420 992h3v5h-3z M420 958h3v5h-3z M421 986h3v5h-3z M419 997h3v5h-3z M423 993h3v5h-3z M424 978h3v5h-3z M426 955h3v5h-3z M427 994h3v5h-3z M429 991h3v5h-3z M430 979h3v5h-3z M432 989h3v5h-3z M433 930h3v5h-3z M435 1002h3v5h-3z M436 990h3v5h-3z M436 1008h3v5h-3z M434 1005h3v5h-3z M438 1030h3v5h-3z M439 1133h3v5h-3z M441 1133h3v5h-3z M441 1018h3v5h-3z M442 993h3v5h-3z M444 969h3v5h-3z M445 750h3v5h-3z M443 741h3v5h-3z M447 1007h3v5h-3z M448 1014h3v5h-3z M450 998h3v5h-3z M452 999h3v5h-3z M451 1018h3v5h-3z M453 1016h3v5h-3z M454 904h3v5h-3z M456 891h3v5h-3z M456 1008h3v5h-3z M454 1011h3v5h-3z M51 910h3v5h-3z M51 939h3v5h-3z M52 979h3v5h-3z M54 969h3v5h-3z M54 993h3v5h-3z M56 1003h3v5h-3z M55 934h3v5h-3z M57 894h3v5h-3z M58 898h3v5h-3z M58 900h3v5h-3z M60 921h3v5h-3z M61 945h3v5h-3z M63 971h3v5h-3z M64 953h3v5h-3z M62 938h3v5h-3z M66 900h3v5h-3z M68 910h3v5h-3z M67 894h3v5h-3z M69 915h3v5h-3z M70 937h3v5h-3z M71 947h3v5h-3z M72 994h3v5h-3z M73 1009h3v5h-3z M73 896h3v5h-3z M71 896h3v5h-3z M75 947h3v5h-3z M76 999h3v5h-3z M78 1033h3v5h-3z M77 1028h3v5h-3z M79 1067h3v5h-3z M80 1062h3v5h-3z M81 1161h3v5h-3z M82 1123h3v5h-3z M84 988h3v5h-3z M85 961h3v5h-3z M87 941h3v5h-3z M88 929h3v5h-3z M90 886h3v5h-3z M91 1005h3v5h-3z M93 1085h3v5h-3z M91 1092h3v5h-3z M94 1103h3v5h-3z M96 1128h3v5h-3z M121 1018h3v5h-3z M120 1012h3v5h-3z M123 1020h3v5h-3z M124 1059h3v5h-3z M123 1055h3v5h-3z M126 1149h3v5h-3z M127 1179h3v5h-3z M130 1202h3v5h-3z M132 1198h3v5h-3z M133 1188h3v5h-3z M132 1191h3v5h-3z M135 1153h3v5h-3z M133 1155h3v5h-3z M136 1139h3v5h-3z M137 1136h3v5h-3z M138 1119h3v5h-3z M139 1109h3v5h-3z M141 1080h3v5h-3z M142 1059h3v5h-3z M143 1062h3v5h-3z M144 1013h3v5h-3z M145 1075h3v5h-3z M147 1025h3v5h-3z M148 1005h3v5h-3z M150 1009h3v5h-3z M148 1011h3v5h-3z M151 1079h3v5h-3z M150 1080h3v5h-3z M153 1188h3v5h-3z M151 1190h3v5h-3z M154 1194h3v5h-3z M156 1195h3v5h-3z M154 1200h3v5h-3z M158 1202h3v5h-3z M160 1196h3v5h-3z M161 1191h3v5h-3z M162 1202h3v5h-3z M163 1203h3v5h-3z M165 1185h3v5h-3z M167 1182h3v5h-3z M166 1181h3v5h-3z M168 1164h3v5h-3z M169 1181h3v5h-3z M171 1171h3v5h-3z M172 1170h3v5h-3z M172 1156h3v5h-3z M170 1156h3v5h-3z M174 1123h3v5h-3z M172 1122h3v5h-3z M175 1126h3v5h-3z M177 1151h3v5h-3z M178 1156h3v5h-3z M177 1163h3v5h-3z M180 1162h3v5h-3z M182 1163h3v5h-3z M181 1162h3v5h-3z M183 1163h3v5h-3z M183 1169h3v5h-3z M181 1170h3v5h-3z M184 1177h3v5h-3z M185 1172h3v5h-3z M186 1187h3v5h-3z M187 1194h3v5h-3z M188 1193h3v5h-3z M189 1200h3v5h-3z M188 1199h3v5h-3z M191 1202h3v5h-3z M193 1200h3v5h-3z M190 1202h3v5h-3z M193 1201h3v5h-3z M195 1204h3v5h-3z M198 1203h3v5h-3z M205 1205h3v5h-3z M214 1202h3v5h-3z M241 1119h3v5h-3z M242 1121h3v5h-3z M243 1091h3v5h-3z M242 1087h3v5h-3z M244 1084h3v5h-3z M245 1077h3v5h-3z M246 1075h3v5h-3z M247 1089h3v5h-3z M249 1107h3v5h-3z M247 1102h3v5h-3z M250 1119h3v5h-3z M252 1147h3v5h-3z M253 1159h3v5h-3z M255 1179h3v5h-3z M254 1183h3v5h-3z M256 1175h3v5h-3z M258 1173h3v5h-3z M258 1189h3v5h-3z M260 1190h3v5h-3z M262 1193h3v5h-3z M261 1194h3v5h-3z M261 1201h3v5h-3z M264 1200h3v5h-3z M262 1198h3v5h-3z M265 1189h3v5h-3z M267 1202h3v5h-3z M268 1193h3v5h-3z M270 1200h3v5h-3z M271 1196h3v5h-3z M271 1199h3v5h-3z M270 1196h3v5h-3z M273 1197h3v5h-3z M276 1197h3v5h-3z M277 1197h3v5h-3z M276 1199h3v5h-3z M279 1199h3v5h-3z M278 1198h3v5h-3z M280 1192h3v5h-3z M283 1205h3v5h-3z M294 1205h3v5h-3z M303 1200h3v5h-3z M304 1205h3v5h-3z M307 1205h3v5h-3z M312 1205h3v5h-3z M315 1205h3v5h-3z M322 1205h3v5h-3z M325 1202h3v5h-3z M327 1202h3v5h-3z M327 1204h3v5h-3z M328 1202h3v5h-3z M331 1205h3v5h-3z M336 1203h3v5h-3z M339 1195h3v5h-3z M337 1200h3v5h-3z M342 1191h3v5h-3z M348 1197h3v5h-3z M349 1187h3v5h-3z M342 1190h3v5h-3z M348 1196h3v5h-3z M346 1200h3v5h-3z M349 1187h3v5h-3z M350 1189h3v5h-3z M351 1185h3v5h-3z M352 1188h3v5h-3z M354 1183h3v5h-3z M354 1187h3v5h-3z M356 1191h3v5h-3z M355 1152h3v5h-3z M357 1159h3v5h-3z M357 1195h3v5h-3z M356 1197h3v5h-3z M358 1168h3v5h-3z M356 1169h3v5h-3z M360 943h3v5h-3z M361 954h3v5h-3z M361 1118h3v5h-3z M363 1094h3v5h-3z M364 1179h3v5h-3z M366 1109h3v5h-3z M367 1113h3v5h-3z M367 1187h3v5h-3z M369 1152h3v5h-3z M372 1155h3v5h-3z M373 1181h3v5h-3z M374 1182h3v5h-3z M375 1192h3v5h-3z M373 1194h3v5h-3z M376 1161h3v5h-3z M377 1161h3v5h-3z M381 1120h3v5h-3z M380 1120h3v5h-3z M382 1142h3v5h-3z M381 1147h3v5h-3z M384 1189h3v5h-3z M387 1196h3v5h-3z M386 1199h3v5h-3z M388 1180h3v5h-3z M390 1187h3v5h-3z M389 1185h3v5h-3z M393 1151h3v5h-3z M395 1157h3v5h-3z M394 1127h3v5h-3z M393 1126h3v5h-3z M396 1109h3v5h-3z M397 1116h3v5h-3z M399 1114h3v5h-3z M400 1068h3v5h-3z M402 1100h3v5h-3z M403 1059h3v5h-3z M405 1068h3v5h-3z M406 1044h3v5h-3z M408 1044h3v5h-3z M409 1021h3v5h-3z M411 998h3v5h-3z M412 1029h3v5h-3z M414 1057h3v5h-3z M415 1048h3v5h-3z M417 1040h3v5h-3z M416 1031h3v5h-3z M418 1001h3v5h-3z M416 1007h3v5h-3z M420 1001h3v5h-3z M421 977h3v5h-3z M423 994h3v5h-3z M421 1007h3v5h-3z M424 990h3v5h-3z M426 1005h3v5h-3z M427 1016h3v5h-3z M427 1040h3v5h-3z M429 997h3v5h-3z M430 1011h3v5h-3z M432 1010h3v5h-3z M432 977h3v5h-3z M430 965h3v5h-3z M433 1016h3v5h-3z M431 1031h3v5h-3z M435 1043h3v5h-3z M436 1028h3v5h-3z M438 1033h3v5h-3z M438 1023h3v5h-3z M439 987h3v5h-3z M438 1003h3v5h-3z M441 1043h3v5h-3z M442 1047h3v5h-3z M444 1012h3v5h-3z M445 1027h3v5h-3z M447 1064h3v5h-3z M446 1076h3v5h-3z M448 1023h3v5h-3z M449 1019h3v5h-3z M450 1027h3v5h-3z M449 1024h3v5h-3z M451 1033h3v5h-3z M452 1038h3v5h-3z M453 1073h3v5h-3z M451 1076h3v5h-3z M454 1083h3v5h-3z M452 1086h3v5h-3z M456 1085h3v5h-3z M51 957h3v5h-3z M53 958h3v5h-3z M52 994h3v5h-3z M54 1005h3v5h-3z M55 1013h3v5h-3z M55 951h3v5h-3z M57 966h3v5h-3z M57 918h3v5h-3z M58 925h3v5h-3z M60 945h3v5h-3z M61 967h3v5h-3z M63 991h3v5h-3z M64 973h3v5h-3z M66 931h3v5h-3z M67 918h3v5h-3z M66 933h3v5h-3z M69 939h3v5h-3z M70 957h3v5h-3z M68 952h3v5h-3z M72 1005h3v5h-3z M73 927h3v5h-3z M74 943h3v5h-3z M75 968h3v5h-3z M77 976h3v5h-3z M76 1017h3v5h-3z M75 1011h3v5h-3z M78 1047h3v5h-3z M79 1047h3v5h-3z M79 1077h3v5h-3z M81 1161h3v5h-3z M82 1130h3v5h-3z M84 1007h3v5h-3z M85 1009h3v5h-3z M85 979h3v5h-3z M87 947h3v5h-3z M88 961h3v5h-3z M90 964h3v5h-3z M90 979h3v5h-3z M91 1023h3v5h-3z M93 1087h3v5h-3z M94 1112h3v5h-3z M96 1119h3v5h-3z M94 1118h3v5h-3z M121 1047h3v5h-3z M120 1052h3v5h-3z M123 1044h3v5h-3z M124 1077h3v5h-3z M126 1159h3v5h-3z M125 1163h3v5h-3z M127 1181h3v5h-3z M129 1201h3v5h-3z M131 1199h3v5h-3z M133 1187h3v5h-3z M134 1183h3v5h-3z M135 1159h3v5h-3z M136 1145h3v5h-3z M138 1124h3v5h-3z M136 1115h3v5h-3z M139 1117h3v5h-3z M137 1116h3v5h-3z M141 1096h3v5h-3z M140 1095h3v5h-3z M142 1075h3v5h-3z M144 1038h3v5h-3z M142 1043h3v5h-3z M145 1091h3v5h-3z M147 1047h3v5h-3z M145 1052h3v5h-3z M148 1029h3v5h-3z M146 1038h3v5h-3z M150 1033h3v5h-3z M148 1037h3v5h-3z M151 1093h3v5h-3z M153 1185h3v5h-3z M154 1193h3v5h-3z M156 1196h3v5h-3z M158 1199h3v5h-3z M156 1199h3v5h-3z M160 1201h3v5h-3z M158 1206h3v5h-3z M162 1201h3v5h-3z M165 1188h3v5h-3z M166 1174h3v5h-3z M164 1177h3v5h-3z M168 1167h3v5h-3z M167 1162h3v5h-3z M169 1187h3v5h-3z M171 1189h3v5h-3z M171 1173h3v5h-3z M172 1159h3v5h-3z M174 1130h3v5h-3z M175 1135h3v5h-3z M177 1157h3v5h-3z M178 1159h3v5h-3z M179 1163h3v5h-3z M180 1164h3v5h-3z M181 1165h3v5h-3z M180 1164h3v5h-3z M183 1171h3v5h-3z M184 1173h3v5h-3z M182 1174h3v5h-3z M186 1187h3v5h-3z M187 1196h3v5h-3z M190 1202h3v5h-3z M193 1202h3v5h-3z M194 1200h3v5h-3z M190 1202h3v5h-3z M188 1200h3v5h-3z M193 1202h3v5h-3z M195 1204h3v5h-3z M194 1205h3v5h-3z M198 1201h3v5h-3z M216 1202h3v5h-3z M241 1135h3v5h-3z M239 1134h3v5h-3z M243 1111h3v5h-3z M244 1101h3v5h-3z M246 1101h3v5h-3z M247 1113h3v5h-3z M249 1125h3v5h-3z M250 1135h3v5h-3z M249 1129h3v5h-3z M252 1159h3v5h-3z M253 1168h3v5h-3z M254 1171h3v5h-3z M255 1175h3v5h-3z M256 1181h3v5h-3z M258 1187h3v5h-3z M259 1188h3v5h-3z M259 1191h3v5h-3z M260 1189h3v5h-3z M261 1195h3v5h-3z M263 1199h3v5h-3z M262 1199h3v5h-3z M264 1199h3v5h-3z M267 1195h3v5h-3z M268 1200h3v5h-3z M270 1200h3v5h-3z M271 1198h3v5h-3z M271 1197h3v5h-3z M273 1193h3v5h-3z M276 1199h3v5h-3z M277 1199h3v5h-3z M278 1199h3v5h-3z M280 1200h3v5h-3z M282 1205h3v5h-3z M281 1205h3v5h-3z M285 1205h3v5h-3z M286 1206h3v5h-3z M288 1205h3v5h-3z M289 1200h3v5h-3z M300 1205h3v5h-3z M298 1201h3v5h-3z M303 1205h3v5h-3z M309 1205h3v5h-3z M308 1204h3v5h-3z M318 1191h3v5h-3z M321 1205h3v5h-3z M328 1201h3v5h-3z M330 1195h3v5h-3z M331 1205h3v5h-3z M333 1202h3v5h-3z M336 1202h3v5h-3z M337 1205h3v5h-3z M340 1203h3v5h-3z M342 1201h3v5h-3z M343 1205h3v5h-3z M346 1201h3v5h-3z M344 1204h3v5h-3z M348 1201h3v5h-3z M346 1206h3v5h-3z M341 1201h3v5h-3z M342 1199h3v5h-3z M346 1201h3v5h-3z M348 1201h3v5h-3z M351 1192h3v5h-3z M352 1186h3v5h-3z M353 1185h3v5h-3z M354 1179h3v5h-3z M355 1174h3v5h-3z M357 1182h3v5h-3z M355 1180h3v5h-3z M358 1186h3v5h-3z M360 1114h3v5h-3z M362 1109h3v5h-3z M361 1117h3v5h-3z M360 1121h3v5h-3z M363 1066h3v5h-3z M364 1098h3v5h-3z M366 1144h3v5h-3z M367 1157h3v5h-3z M366 1163h3v5h-3z M369 1167h3v5h-3z M370 1172h3v5h-3z M372 1173h3v5h-3z M374 1171h3v5h-3z M373 1195h3v5h-3z M371 1199h3v5h-3z M375 1144h3v5h-3z M376 1145h3v5h-3z M376 1169h3v5h-3z M375 1172h3v5h-3z M378 1185h3v5h-3z M379 1179h3v5h-3z M381 1151h3v5h-3z M379 1150h3v5h-3z M382 1164h3v5h-3z M381 1167h3v5h-3z M384 1169h3v5h-3z M385 1155h3v5h-3z M390 1179h3v5h-3z M391 1181h3v5h-3z M391 1167h3v5h-3z M393 1168h3v5h-3z M393 1155h3v5h-3z M392 1154h3v5h-3z M394 1159h3v5h-3z M395 1160h3v5h-3z M396 1111h3v5h-3z M397 1122h3v5h-3z M398 1126h3v5h-3z M399 1090h3v5h-3z M397 1089h3v5h-3z M400 1085h3v5h-3z M398 1091h3v5h-3z M402 1029h3v5h-3z M403 1033h3v5h-3z M403 1001h3v5h-3z M405 996h3v5h-3z M405 917h3v5h-3z M406 951h3v5h-3z M408 944h3v5h-3z M408 876h3v5h-3z M409 966h3v5h-3z M411 953h3v5h-3z M411 883h3v5h-3z M412 868h3v5h-3z M412 830h3v5h-3z M414 854h3v5h-3z M412 833h3v5h-3z M415 862h3v5h-3z M417 843h3v5h-3z M417 879h3v5h-3z M418 803h3v5h-3z M419 814h3v5h-3z M420 756h3v5h-3z M419 741h3v5h-3z M421 704h3v5h-3z M423 790h3v5h-3z M424 813h3v5h-3z M426 771h3v5h-3z M427 790h3v5h-3z M429 756h3v5h-3z M430 835h3v5h-3z M432 877h3v5h-3z M433 752h3v5h-3z M435 942h3v5h-3z M433 935h3v5h-3z M436 860h3v5h-3z M434 864h3v5h-3z M438 827h3v5h-3z M439 848h3v5h-3z M439 726h3v5h-3z M441 873h3v5h-3z M442 706h3v5h-3z M444 947h3v5h-3z M445 957h3v5h-3z M445 865h3v5h-3z M447 779h3v5h-3z M449 790h3v5h-3z M448 935h3v5h-3z M450 910h3v5h-3z M451 796h3v5h-3z M452 792h3v5h-3z M453 923h3v5h-3z M454 1001h3v5h-3z M453 1002h3v5h-3z M456 946h3v5h-3z M51 953h3v5h-3z M52 994h3v5h-3z M50 998h3v5h-3z M54 1005h3v5h-3z M56 1002h3v5h-3z M55 949h3v5h-3z M57 911h3v5h-3z M58 921h3v5h-3z M57 936h3v5h-3z M60 943h3v5h-3z M61 965h3v5h-3z M63 993h3v5h-3z M65 976h3v5h-3z M64 973h3v5h-3z M66 925h3v5h-3z M68 913h3v5h-3z M67 911h3v5h-3z M69 931h3v5h-3z M70 955h3v5h-3z M72 1005h3v5h-3z M73 927h3v5h-3z M71 928h3v5h-3z M75 965h3v5h-3z M76 1015h3v5h-3z M78 1010h3v5h-3z M78 1049h3v5h-3z M80 1049h3v5h-3z M79 1077h3v5h-3z M81 1157h3v5h-3z M82 1130h3v5h-3z M84 1009h3v5h-3z M85 1020h3v5h-3z M85 988h3v5h-3z M87 999h3v5h-3z M87 982h3v5h-3z M88 968h3v5h-3z M89 960h3v5h-3z M90 976h3v5h-3z M89 966h3v5h-3z M91 1015h3v5h-3z M89 1019h3v5h-3z M93 1092h3v5h-3z M94 1109h3v5h-3z M96 1108h3v5h-3z M96 1120h3v5h-3z M98 1120h3v5h-3z M121 1044h3v5h-3z M123 1050h3v5h-3z M124 1081h3v5h-3z M126 1159h3v5h-3z M127 1178h3v5h-3z M129 1201h3v5h-3z M132 1200h3v5h-3z M131 1205h3v5h-3z M133 1187h3v5h-3z M135 1156h3v5h-3z M136 1157h3v5h-3z M136 1145h3v5h-3z M138 1130h3v5h-3z M139 1119h3v5h-3z M141 1096h3v5h-3z M142 1090h3v5h-3z M142 1083h3v5h-3z M141 1076h3v5h-3z M144 1048h3v5h-3z M145 1096h3v5h-3z M144 1095h3v5h-3z M147 1059h3v5h-3z M148 1035h3v5h-3z M150 1043h3v5h-3z M151 1096h3v5h-3z M149 1091h3v5h-3z M153 1190h3v5h-3z M155 1186h3v5h-3z M154 1195h3v5h-3z M152 1193h3v5h-3z M156 1199h3v5h-3z M158 1202h3v5h-3z M160 1196h3v5h-3z M162 1202h3v5h-3z M165 1187h3v5h-3z M166 1174h3v5h-3z M168 1174h3v5h-3z M168 1167h3v5h-3z M169 1181h3v5h-3z M168 1183h3v5h-3z M171 1172h3v5h-3z M172 1165h3v5h-3z M174 1161h3v5h-3z M174 1133h3v5h-3z M173 1140h3v5h-3z M175 1137h3v5h-3z M177 1155h3v5h-3z M178 1156h3v5h-3z M178 1158h3v5h-3z M180 1164h3v5h-3z M181 1165h3v5h-3z M183 1171h3v5h-3z M182 1170h3v5h-3z M184 1173h3v5h-3z M182 1173h3v5h-3z M186 1187h3v5h-3z M187 1194h3v5h-3z M186 1191h3v5h-3z M189 1197h3v5h-3z M193 1202h3v5h-3z M194 1198h3v5h-3z M190 1197h3v5h-3z M193 1202h3v5h-3z M194 1201h3v5h-3z M195 1202h3v5h-3z M198 1205h3v5h-3z M207 1205h3v5h-3z M205 1203h3v5h-3z M241 1137h3v5h-3z M243 1114h3v5h-3z M244 1106h3v5h-3z M246 1106h3v5h-3z M247 1114h3v5h-3z M249 1139h3v5h-3z M252 1160h3v5h-3z M251 1167h3v5h-3z M253 1156h3v5h-3z M255 1175h3v5h-3z M253 1177h3v5h-3z M256 1170h3v5h-3z M258 1186h3v5h-3z M259 1191h3v5h-3z M258 1191h3v5h-3z M262 1199h3v5h-3z M264 1201h3v5h-3z M265 1194h3v5h-3z M264 1191h3v5h-3z M267 1199h3v5h-3z M270 1199h3v5h-3z M268 1201h3v5h-3z M271 1199h3v5h-3z M273 1197h3v5h-3z M274 1200h3v5h-3z M274 1187h3v5h-3z M272 1182h3v5h-3z M276 1202h3v5h-3z M277 1198h3v5h-3z M278 1196h3v5h-3z M279 1204h3v5h-3z M280 1200h3v5h-3z M281 1200h3v5h-3z M282 1205h3v5h-3z M285 1202h3v5h-3z M291 1193h3v5h-3z M292 1193h3v5h-3z M292 1201h3v5h-3z M290 1199h3v5h-3z M298 1205h3v5h-3z M303 1197h3v5h-3z M302 1193h3v5h-3z M313 1205h3v5h-3z M315 1205h3v5h-3z M314 1203h3v5h-3z M322 1197h3v5h-3z M321 1195h3v5h-3z M324 1202h3v5h-3z M325 1199h3v5h-3z M327 1202h3v5h-3z M330 1201h3v5h-3z M334 1202h3v5h-3z M335 1203h3v5h-3z M336 1205h3v5h-3z M337 1191h3v5h-3z M340 1199h3v5h-3z M342 1203h3v5h-3z M344 1203h3v5h-3z M345 1200h3v5h-3z M348 1205h3v5h-3z M341 1199h3v5h-3z M343 1202h3v5h-3z M345 1206h3v5h-3z M345 1201h3v5h-3z M347 1202h3v5h-3z M349 1205h3v5h-3z M351 1177h3v5h-3z M352 1185h3v5h-3z M354 1199h3v5h-3z M352 1203h3v5h-3z M355 1188h3v5h-3z M357 1180h3v5h-3z M358 1177h3v5h-3z M360 1047h3v5h-3z M359 1036h3v5h-3z M361 1179h3v5h-3z M363 1073h3v5h-3z M365 1061h3v5h-3z M364 1120h3v5h-3z M362 1120h3v5h-3z M366 1163h3v5h-3z M369 1127h3v5h-3z M370 1197h3v5h-3z M372 1170h3v5h-3z M371 1174h3v5h-3z M373 1183h3v5h-3z M374 1188h3v5h-3z M375 1170h3v5h-3z M377 1169h3v5h-3z M376 1161h3v5h-3z M377 1160h3v5h-3z M378 1187h3v5h-3z M379 1131h3v5h-3z M381 1125h3v5h-3z M380 1122h3v5h-3z M382 1168h3v5h-3z M384 1183h3v5h-3z M386 1180h3v5h-3z M385 1183h3v5h-3z M387 1159h3v5h-3z M385 1160h3v5h-3z M388 1180h3v5h-3z M390 1179h3v5h-3z M391 1152h3v5h-3z M392 1153h3v5h-3z M393 1147h3v5h-3z M394 1137h3v5h-3z M392 1137h3v5h-3z M396 1141h3v5h-3z M397 1125h3v5h-3z M399 1201h3v5h-3z M400 1198h3v5h-3z M400 1086h3v5h-3z M399 1082h3v5h-3z M402 1012h3v5h-3z M404 1025h3v5h-3z M403 990h3v5h-3z M404 1004h3v5h-3z M405 1004h3v5h-3z M406 1015h3v5h-3z M406 994h3v5h-3z M408 927h3v5h-3z M409 997h3v5h-3z M408 999h3v5h-3z M411 1007h3v5h-3z M412 832h3v5h-3z M414 940h3v5h-3z M415 944h3v5h-3z M413 932h3v5h-3z M417 947h3v5h-3z M418 869h3v5h-3z M420 878h3v5h-3z M422 864h3v5h-3z M421 881h3v5h-3z M423 901h3v5h-3z M425 884h3v5h-3z M424 960h3v5h-3z M425 963h3v5h-3z M426 901h3v5h-3z M427 919h3v5h-3z M428 900h3v5h-3z M429 909h3v5h-3z M427 904h3v5h-3z M430 917h3v5h-3z M432 1001h3v5h-3z M433 768h3v5h-3z M431 760h3v5h-3z M435 1081h3v5h-3z M436 936h3v5h-3z M435 943h3v5h-3z M438 912h3v5h-3z M439 880h3v5h-3z M441 953h3v5h-3z M442 886h3v5h-3z M444 901h3v5h-3z M442 885h3v5h-3z M445 713h3v5h-3z M447 772h3v5h-3z M448 966h3v5h-3z M450 975h3v5h-3z M451 930h3v5h-3z M450 945h3v5h-3z M453 1025h3v5h-3z M454 1018h3v5h-3z M456 1007h3v5h-3z M456 990h3v5h-3z" fill="#0a2070" fill-opacity="0.55"/>
<path d="M52.5 932v3 M56.5 928v3 M58.5 885v3 M56.5 883v3 M62.5 935v3 M67.5 896v3 M65.5 890v3 M68.5 885v3 M74.5 901v3 M76.5 941v3 M77.5 992v3 M79.5 1028v3 M82.5 1162v3 M81.5 1163v3 M83.5 1000v3 M87.5 958v3 M89.5 930v3 M88.5 915v3 M94.5 1078v3 M96.5 1071v3 M125.5 1147v3 M134.5 1195v3 M133.5 1191v3 M136.5 1152v3 M137.5 1137v3 M142.5 1071v3 M142.5 1038v3 M147.5 1000v3 M149.5 998v3 M157.5 1201v3 M157.5 1195v3 M159.5 1198v3 M158.5 1202v3 M159.5 1190v3 M163.5 1203v3 M166.5 1186v3 M167.5 1173v3 M169.5 1170v3 M185.5 1177v3 M186.5 1176v3 M192.5 1203v3 M189.5 1204v3 M194.5 1203v3 M199.5 1204v3 M242.5 1118v3 M244.5 1094v3 M246.5 1097v3 M248.5 1086v3 M253.5 1142v3 M256.5 1158v3 M257.5 1170v3 M259.5 1176v3 M264.5 1195v3 M273.5 1205v3 M278.5 1198v3 M276.5 1202v3 M281.5 1200v3 M310.5 1206v3 M332.5 1200v3 M347.5 1192v3 M345.5 1204v3 M349.5 1196v3 M352.5 1191v3 M353.5 1162v3 M359.5 1174v3 M371.5 1150v3 M374.5 1178v3 M375.5 1176v3 M382.5 1160v3 M381.5 1158v3 M386.5 1074v3 M388.5 1180v3 M398.5 1135v3 M398.5 1098v3 M406.5 1092v3 M407.5 1099v3 M410.5 1000v3 M410.5 1143v3 M412.5 993v3 M416.5 1009v3 M418.5 1019v3 M419.5 982v3 M428.5 995v3 M439.5 1031v3 M442.5 1134v3 M442.5 1019v3 M444.5 742v3 M451.5 999v3 M452.5 1019v3 M455.5 905v3 M457.5 892v3 M55.5 970v3 M55.5 994v3 M57.5 1004v3 M59.5 899v3 M67.5 901v3 M68.5 895v3 M70.5 916v3 M72.5 948v3 M73.5 995v3 M72.5 897v3 M77.5 1000v3 M85.5 989v3 M88.5 942v3 M94.5 1086v3 M95.5 1104v3 M122.5 1019v3 M121.5 1013v3 M124.5 1021v3 M125.5 1060v3 M127.5 1150v3 M131.5 1203v3 M134.5 1189v3 M137.5 1140v3 M138.5 1137v3 M139.5 1120v3 M143.5 1060v3 M145.5 1014v3 M154.5 1189v3 M163.5 1203v3 M168.5 1183v3 M175.5 1124v3 M178.5 1152v3 M181.5 1163v3 M184.5 1170v3 M185.5 1178v3 M190.5 1201v3 M192.5 1203v3 M191.5 1203v3 M194.5 1202v3 M196.5 1205v3 M206.5 1206v3 M242.5 1120v3 M244.5 1092v3 M245.5 1085v3 M246.5 1078v3 M247.5 1076v3 M248.5 1090v3 M253.5 1148v3 M254.5 1160v3 M255.5 1184v3 M261.5 1191v3 M262.5 1202v3 M265.5 1201v3 M271.5 1197v3 M277.5 1198v3 M278.5 1198v3 M280.5 1200v3 M279.5 1199v3 M305.5 1206v3 M313.5 1206v3 M326.5 1203v3 M328.5 1205v3 M338.5 1201v3 M343.5 1192v3 M349.5 1198v3 M343.5 1191v3 M349.5 1197v3 M350.5 1188v3 M352.5 1186v3 M355.5 1184v3 M356.5 1153v3 M358.5 1160v3 M358.5 1196v3 M357.5 1198v3 M359.5 1169v3 M364.5 1095v3 M368.5 1188v3 M370.5 1153v3 M373.5 1156v3 M377.5 1162v3 M378.5 1162v3 M385.5 1190v3 M388.5 1197v3 M387.5 1200v3 M389.5 1181v3 M396.5 1158v3 M404.5 1060v3 M406.5 1069v3 M407.5 1045v3 M410.5 1022v3 M412.5 999v3 M418.5 1041v3 M419.5 1002v3 M421.5 1002v3 M422.5 978v3 M427.5 1006v3 M431.5 1012v3 M434.5 1017v3 M432.5 1032v3 M437.5 1029v3 M439.5 1024v3 M440.5 988v3 M439.5 1004v3 M442.5 1044v3 M446.5 1028v3 M449.5 1024v3 M450.5 1020v3 M451.5 1028v3 M450.5 1025v3 M457.5 1086v3 M54.5 959v3 M55.5 1006v3 M56.5 1014v3 M61.5 946v3 M64.5 992v3 M65.5 974v3 M68.5 919v3 M70.5 940v3 M69.5 953v3 M74.5 928v3 M75.5 944v3 M78.5 977v3 M76.5 1012v3 M80.5 1048v3 M82.5 1162v3 M83.5 1131v3 M85.5 1008v3 M88.5 948v3 M91.5 965v3 M94.5 1088v3 M122.5 1048v3 M121.5 1053v3 M124.5 1045v3 M126.5 1164v3 M128.5 1182v3 M139.5 1125v3 M140.5 1118v3 M138.5 1117v3 M142.5 1097v3 M141.5 1096v3 M146.5 1053v3 M149.5 1030v3 M147.5 1039v3 M152.5 1094v3 M159.5 1200v3 M165.5 1178v3 M170.5 1188v3 M172.5 1190v3 M176.5 1136v3 M178.5 1158v3 M181.5 1165v3 M181.5 1165v3 M185.5 1174v3 M183.5 1175v3 M191.5 1203v3 M191.5 1203v3 M189.5 1201v3 M199.5 1202v3 M217.5 1203v3 M247.5 1102v3 M250.5 1126v3 M250.5 1130v3 M256.5 1176v3 M257.5 1182v3 M259.5 1188v3 M261.5 1190v3 M262.5 1196v3 M268.5 1196v3 M271.5 1201v3 M272.5 1199v3 M281.5 1201v3 M289.5 1206v3 M290.5 1201v3 M301.5 1206v3 M329.5 1202v3 M338.5 1206v3 M344.5 1206v3 M347.5 1202v3 M353.5 1187v3 M355.5 1180v3 M356.5 1181v3 M359.5 1187v3 M361.5 1115v3 M362.5 1118v3 M361.5 1122v3 M367.5 1145v3 M367.5 1164v3 M376.5 1145v3 M377.5 1146v3 M376.5 1173v3 M380.5 1151v3 M382.5 1168v3 M394.5 1169v3 M394.5 1156v3 M398.5 1090v3 M399.5 1092v3 M404.5 1034v3 M406.5 918v3 M407.5 952v3 M409.5 945v3 M415.5 855v3 M413.5 834v3 M421.5 757v3 M420.5 742v3 M422.5 705v3 M425.5 814v3 M436.5 943v3 M437.5 861v3 M445.5 948v3 M448.5 780v3 M451.5 911v3 M452.5 797v3 M52.5 954v3 M53.5 995v3 M51.5 999v3 M57.5 1003v3 M62.5 966v3 M70.5 932v3 M73.5 1006v3 M76.5 966v3 M79.5 1011v3 M79.5 1050v3 M81.5 1050v3 M85.5 1010v3 M86.5 989v3 M89.5 969v3 M90.5 961v3 M92.5 1016v3 M90.5 1020v3 M94.5 1093v3 M97.5 1109v3 M99.5 1121v3 M124.5 1051v3 M128.5 1179v3 M130.5 1202v3 M133.5 1201v3 M140.5 1120v3 M142.5 1097v3 M143.5 1091v3 M143.5 1084v3 M145.5 1096v3 M153.5 1194v3 M157.5 1200v3 M159.5 1203v3 M167.5 1175v3 M169.5 1175v3 M169.5 1168v3 M170.5 1182v3 M169.5 1184v3 M173.5 1166v3 M175.5 1162v3 M175.5 1134v3 M176.5 1138v3 M178.5 1156v3 M181.5 1165v3 M182.5 1166v3 M183.5 1171v3 M187.5 1188v3 M194.5 1203v3 M195.5 1202v3 M208.5 1206v3 M245.5 1107v3 M250.5 1140v3 M253.5 1161v3 M254.5 1178v3 M257.5 1171v3 M260.5 1192v3 M268.5 1200v3 M272.5 1200v3 M275.5 1188v3 M279.5 1197v3 M281.5 1201v3 M286.5 1203v3 M292.5 1194v3 M293.5 1202v3 M299.5 1206v3 M304.5 1198v3 M314.5 1206v3 M331.5 1202v3 M337.5 1206v3 M341.5 1200v3 M343.5 1204v3 M346.5 1201v3 M346.5 1202v3 M350.5 1206v3 M353.5 1204v3 M359.5 1178v3 M361.5 1048v3 M362.5 1180v3 M365.5 1121v3 M367.5 1164v3 M373.5 1171v3 M375.5 1189v3 M378.5 1170v3 M377.5 1162v3 M378.5 1161v3 M382.5 1126v3 M381.5 1123v3 M387.5 1181v3 M386.5 1184v3 M388.5 1160v3 M392.5 1153v3 M393.5 1154v3 M394.5 1148v3 M397.5 1142v3 M406.5 1005v3 M407.5 1016v3 M407.5 995v3 M410.5 998v3 M409.5 1000v3 M412.5 1008v3 M416.5 945v3 M425.5 961v3 M426.5 964v3 M427.5 902v3 M430.5 910v3 M431.5 918v3 M432.5 761v3 M440.5 881v3 M443.5 887v3 M451.5 976v3" stroke="#18a8c8" stroke-width="1" fill="none"/>
<path d="M54.5 930v3 M57.5 883v3 M63.5 919v3 M64.5 964v3 M71.5 989v3 M75.5 999v3 M83.5 1116v3 M84.5 1116v3 M86.5 950v3 M92.5 1008v3 M95.5 1104v3 M125.5 1048v3 M128.5 1182v3 M130.5 1203v3 M139.5 1112v3 M140.5 1102v3 M143.5 1048v3 M146.5 1068v3 M148.5 1065v3 M161.5 1195v3 M173.5 1157v3 M176.5 1127v3 M180.5 1159v3 M184.5 1171v3 M186.5 1189v3 M194.5 1203v3 M210.5 1204v3 M244.5 1121v3 M245.5 1085v3 M254.5 1156v3 M261.5 1182v3 M263.5 1199v3 M264.5 1200v3 M271.5 1201v3 M274.5 1198v3 M314.5 1194v3 M330.5 1194v3 M340.5 1196v3 M343.5 1204v3 M350.5 1193v3 M360.5 1108v3 M365.5 1080v3 M367.5 1160v3 M370.5 1169v3 M380.5 1175v3 M395.5 1148v3 M400.5 1098v3 M409.5 1002v3 M411.5 1020v3 M415.5 952v3 M421.5 959v3 M420.5 998v3 M431.5 980v3 M440.5 1134v3 M446.5 751v3 M449.5 1015v3 M453.5 1000v3 M455.5 1012v3 M59.5 901v3 M62.5 946v3 M79.5 1034v3 M81.5 1063v3 M82.5 1162v3 M83.5 1124v3 M92.5 1006v3 M92.5 1093v3 M124.5 1056v3 M134.5 1156v3 M151.5 1010v3 M152.5 1191v3 M155.5 1195v3 M157.5 1196v3 M166.5 1186v3 M170.5 1182v3 M171.5 1157v3 M173.5 1123v3 M176.5 1127v3 M179.5 1157v3 M182.5 1163v3 M188.5 1195v3 M189.5 1200v3 M194.5 1201v3 M243.5 1122v3 M243.5 1088v3 M250.5 1108v3 M248.5 1103v3 M251.5 1120v3 M259.5 1174v3 M259.5 1190v3 M268.5 1203v3 M271.5 1201v3 M272.5 1200v3 M274.5 1198v3 M308.5 1206v3 M316.5 1206v3 M329.5 1203v3 M337.5 1204v3 M357.5 1192v3 M362.5 955v3 M365.5 1180v3 M376.5 1193v3 M391.5 1188v3 M401.5 1069v3 M413.5 1030v3 M416.5 1049v3 M417.5 1032v3 M422.5 1008v3 M425.5 991v3 M428.5 1041v3 M443.5 1048v3 M445.5 1013v3 M448.5 1065v3 M447.5 1077v3 M52.5 958v3 M56.5 952v3 M59.5 926v3 M62.5 968v3 M67.5 932v3 M73.5 1006v3 M89.5 962v3 M91.5 980v3 M92.5 1024v3 M95.5 1113v3 M136.5 1160v3 M137.5 1146v3 M145.5 1039v3 M149.5 1038v3 M154.5 1186v3 M157.5 1197v3 M157.5 1200v3 M161.5 1202v3 M159.5 1207v3 M172.5 1174v3 M175.5 1131v3 M188.5 1197v3 M195.5 1201v3 M242.5 1136v3 M255.5 1172v3 M264.5 1200v3 M304.5 1206v3 M322.5 1206v3 M331.5 1196v3 M345.5 1205v3 M368.5 1158v3 M373.5 1174v3 M372.5 1200v3 M377.5 1170v3 M382.5 1152v3 M386.5 1156v3 M391.5 1180v3 M392.5 1168v3 M396.5 1161v3 M398.5 1123v3 M404.5 1002v3 M413.5 869v3 M418.5 844v3 M434.5 753v3 M440.5 727v3 M446.5 958v3 M446.5 866v3 M453.5 793v3 M454.5 924v3 M59.5 922v3 M58.5 937v3 M61.5 944v3 M67.5 926v3 M69.5 914v3 M68.5 912v3 M74.5 928v3 M97.5 1121v3 M122.5 1045v3 M125.5 1082v3 M127.5 1160v3 M134.5 1188v3 M136.5 1157v3 M146.5 1097v3 M151.5 1044v3 M154.5 1191v3 M163.5 1203v3 M166.5 1188v3 M172.5 1173v3 M179.5 1159v3 M196.5 1203v3 M244.5 1115v3 M247.5 1107v3 M265.5 1202v3 M266.5 1195v3 M271.5 1200v3 M269.5 1202v3 M273.5 1183v3 M282.5 1201v3 M283.5 1206v3 M338.5 1192v3 M346.5 1207v3 M355.5 1200v3 M360.5 1037v3 M370.5 1128v3 M372.5 1175v3 M393.5 1138v3 M398.5 1126v3 M400.5 1202v3 M405.5 1026v3 M404.5 991v3 M405.5 1005v3 M415.5 941v3 M423.5 865v3 M422.5 882v3 M426.5 885v3 M429.5 901v3 M433.5 1002v3 M434.5 769v3 M436.5 1082v3 M437.5 937v3 M439.5 913v3 M445.5 902v3 M454.5 1026v3 M457.5 991v3" stroke="#1a70d0" stroke-width="1" fill="none"/>
<path d="M53.5 977v3 M55.5 988v3 M59.5 891v3 M61.5 913v3 M65.5 948v3 M70.5 896v3 M71.5 930v3 M76.5 916v3 M80.5 1061v3 M88.5 928v3 M91.5 954v3 M91.5 1006v3 M122.5 1011v3 M124.5 1014v3 M127.5 1150v3 M145.5 1006v3 M147.5 1006v3 M149.5 1001v3 M151.5 1006v3 M152.5 1075v3 M154.5 1188v3 M155.5 1195v3 M159.5 1201v3 M169.5 1165v3 M170.5 1186v3 M172.5 1191v3 M175.5 1119v3 M178.5 1154v3 M179.5 1171v3 M182.5 1165v3 M187.5 1188v3 M194.5 1206v3 M191.5 1203v3 M247.5 1078v3 M245.5 1085v3 M250.5 1099v3 M251.5 1116v3 M258.5 1173v3 M260.5 1186v3 M266.5 1197v3 M268.5 1198v3 M277.5 1193v3 M295.5 1206v3 M294.5 1201v3 M323.5 1206v3 M325.5 1203v3 M323.5 1199v3 M331.5 1206v3 M337.5 1201v3 M343.5 1203v3 M358.5 1173v3 M361.5 1082v3 M364.5 1115v3 M368.5 1106v3 M370.5 1105v3 M376.5 1162v3 M375.5 1159v3 M386.5 1179v3 M391.5 1123v3 M392.5 1155v3 M397.5 1123v3 M401.5 1069v3 M404.5 1039v3 M407.5 1026v3 M413.5 998v3 M414.5 959v3 M421.5 993v3 M422.5 987v3 M424.5 994v3 M425.5 979v3 M430.5 992v3 M433.5 990v3 M434.5 931v3 M436.5 1003v3 M437.5 991v3 M437.5 1009v3 M435.5 1006v3 M443.5 994v3 M445.5 970v3 M448.5 1008v3 M454.5 1017v3 M52.5 911v3 M52.5 940v3 M56.5 935v3 M58.5 895v3 M64.5 972v3 M65.5 954v3 M63.5 939v3 M69.5 911v3 M74.5 1010v3 M74.5 897v3 M76.5 948v3 M78.5 1029v3 M86.5 962v3 M89.5 930v3 M91.5 887v3 M133.5 1199v3 M136.5 1154v3 M144.5 1063v3 M148.5 1026v3 M149.5 1006v3 M149.5 1012v3 M151.5 1081v3 M159.5 1203v3 M161.5 1197v3 M162.5 1192v3 M169.5 1165v3 M172.5 1172v3 M173.5 1171v3 M173.5 1157v3 M178.5 1164v3 M183.5 1164v3 M184.5 1164v3 M182.5 1171v3 M189.5 1194v3 M199.5 1204v3 M257.5 1176v3 M272.5 1197v3 M304.5 1201v3 M323.5 1206v3 M332.5 1206v3 M340.5 1196v3 M350.5 1188v3 M353.5 1189v3 M357.5 1170v3 M361.5 944v3 M362.5 1119v3 M367.5 1110v3 M368.5 1114v3 M375.5 1183v3 M374.5 1195v3 M382.5 1121v3 M381.5 1121v3 M383.5 1143v3 M382.5 1148v3 M395.5 1128v3 M394.5 1127v3 M398.5 1117v3 M400.5 1115v3 M409.5 1045v3 M415.5 1058v3 M417.5 1008v3 M424.5 995v3 M428.5 1017v3 M430.5 998v3 M433.5 1011v3 M433.5 978v3 M431.5 966v3 M436.5 1044v3 M453.5 1039v3 M454.5 1074v3 M452.5 1077v3 M455.5 1084v3 M453.5 1087v3 M58.5 919v3 M67.5 934v3 M71.5 958v3 M76.5 969v3 M77.5 1018v3 M79.5 1048v3 M80.5 1078v3 M86.5 1010v3 M86.5 980v3 M97.5 1120v3 M127.5 1160v3 M130.5 1202v3 M132.5 1200v3 M135.5 1184v3 M143.5 1076v3 M143.5 1044v3 M146.5 1092v3 M148.5 1048v3 M155.5 1194v3 M163.5 1202v3 M169.5 1168v3 M173.5 1160v3 M179.5 1160v3 M184.5 1172v3 M194.5 1203v3 M196.5 1205v3 M195.5 1206v3 M240.5 1135v3 M244.5 1112v3 M245.5 1102v3 M251.5 1136v3 M253.5 1160v3 M260.5 1189v3 M263.5 1200v3 M277.5 1200v3 M283.5 1206v3 M282.5 1206v3 M286.5 1206v3 M287.5 1207v3 M299.5 1202v3 M319.5 1192v3 M337.5 1203v3 M341.5 1204v3 M343.5 1202v3 M349.5 1202v3 M347.5 1207v3 M342.5 1202v3 M349.5 1202v3 M352.5 1193v3 M354.5 1186v3 M358.5 1183v3 M363.5 1110v3 M364.5 1067v3 M365.5 1099v3 M371.5 1173v3 M379.5 1186v3 M380.5 1180v3 M392.5 1182v3 M395.5 1160v3 M399.5 1127v3 M400.5 1091v3 M401.5 1086v3 M403.5 1030v3 M409.5 877v3 M412.5 884v3 M413.5 831v3 M416.5 863v3 M418.5 880v3 M420.5 815v3 M424.5 791v3 M428.5 791v3 M430.5 757v3 M433.5 878v3 M435.5 865v3 M442.5 874v3 M443.5 707v3 M450.5 791v3 M454.5 1003v3 M457.5 947v3 M55.5 1006v3 M56.5 950v3 M58.5 912v3 M65.5 974v3 M71.5 956v3 M72.5 929v3 M77.5 1016v3 M80.5 1078v3 M83.5 1131v3 M86.5 1021v3 M88.5 1000v3 M88.5 983v3 M91.5 977v3 M90.5 967v3 M95.5 1110v3 M137.5 1158v3 M137.5 1146v3 M139.5 1131v3 M142.5 1077v3 M145.5 1049v3 M148.5 1060v3 M149.5 1036v3 M152.5 1097v3 M184.5 1172v3 M188.5 1195v3 M187.5 1192v3 M195.5 1199v3 M206.5 1204v3 M242.5 1138v3 M252.5 1168v3 M254.5 1157v3 M259.5 1187v3 M263.5 1200v3 M265.5 1192v3 M275.5 1201v3 M277.5 1203v3 M280.5 1205v3 M293.5 1194v3 M291.5 1200v3 M316.5 1206v3 M328.5 1203v3 M336.5 1204v3 M342.5 1200v3 M348.5 1203v3 M352.5 1178v3 M353.5 1186v3 M358.5 1181v3 M364.5 1074v3 M366.5 1062v3 M363.5 1121v3 M371.5 1198v3 M374.5 1184v3 M379.5 1188v3 M380.5 1132v3 M385.5 1184v3 M386.5 1161v3 M391.5 1180v3 M395.5 1138v3 M401.5 1199v3 M401.5 1087v3 M400.5 1083v3 M403.5 1013v3 M413.5 833v3 M414.5 933v3 M418.5 948v3 M419.5 870v3 M421.5 879v3 M428.5 920v3 M428.5 905v3 M442.5 954v3 M449.5 967v3 M452.5 931v3 M451.5 946v3 M457.5 1008v3" stroke="#20c8a8" stroke-width="1" fill="none"/>
<path d="M73.5 985v3 M85.5 984v3 M97.5 1129v3 M125.5 1009v3 M181.5 1162v3 M188.5 1195v3 M193.5 1198v3 M196.5 1206v3 M212.5 1206v3 M265.5 1202v3 M272.5 1200v3 M304.5 1206v3 M345.5 1203v3 M362.5 1102v3 M398.5 1120v3 M412.5 1013v3 M427.5 956v3 M457.5 1009v3 M53.5 980v3 M61.5 922v3 M71.5 938v3 M80.5 1068v3 M97.5 1129v3 M133.5 1192v3 M140.5 1110v3 M142.5 1081v3 M146.5 1076v3 M152.5 1080v3 M164.5 1204v3 M215.5 1203v3 M263.5 1199v3 M269.5 1194v3 M284.5 1206v3 M347.5 1201v3 M355.5 1188v3 M394.5 1152v3 M397.5 1110v3 M403.5 1101v3 M439.5 1034v3 M452.5 1034v3 M53.5 995v3 M58.5 967v3 M95.5 1119v3 M125.5 1078v3 M137.5 1116v3 M151.5 1034v3 M167.5 1175v3 M168.5 1163v3 M180.5 1164v3 M187.5 1188v3 M248.5 1114v3 M265.5 1200v3 M269.5 1201v3 M272.5 1198v3 M274.5 1194v3 M309.5 1205v3 M334.5 1203v3 M374.5 1196v3 M393.5 1155v3 M397.5 1112v3 M406.5 997v3 M410.5 967v3 M412.5 954v3 M419.5 804v3 M427.5 772v3 M431.5 836v3 M434.5 936v3 M439.5 828v3 M440.5 849v3 M449.5 936v3 M455.5 1002v3 M64.5 994v3 M66.5 977v3 M82.5 1158v3 M132.5 1206v3 M150.5 1092v3 M155.5 1196v3 M174.5 1141v3 M179.5 1157v3 M185.5 1174v3 M183.5 1174v3 M248.5 1115v3 M278.5 1199v3 M303.5 1194v3 M349.5 1206v3 M344.5 1203v3 M356.5 1189v3 M409.5 928v3 M424.5 902v3 M436.5 944v3 M443.5 886v3 M446.5 714v3 M448.5 773v3 M455.5 1019v3" stroke="#60d070" stroke-width="1" fill="none"/>
<path d="M132.5 1200v3 M355.5 1164v3 M403.5 1164v3 M128.5 1180v3 M155.5 1201v3 M167.5 1182v3 M263.5 1194v3 M295.5 1206v3 M328.5 1203v3 M351.5 1190v3 M390.5 1186v3 M332.5 1206v3 M347.5 1202v3 M383.5 1165v3 M161.5 1197v3 M199.5 1206v3 M259.5 1192v3 M274.5 1198v3 M323.5 1198v3 M389.5 1181v3" stroke="#e0c000" stroke-width="1" fill="none"/>
<path d="M172.5 1169v3 M183.5 1174v3 M190.5 1201v3 M280.5 1197v3 M349.5 1196v3 M378.5 1177v3 M187.5 1188v3 M277.5 1200v3 M182.5 1166v3 M254.5 1169v3 M278.5 1200v3 M310.5 1206v3 M356.5 1175v3 M190.5 1198v3 M191.5 1198v3 M256.5 1176v3 M315.5 1204v3 M325.5 1203v3 M326.5 1200v3 M335.5 1203v3 M376.5 1171v3 M383.5 1169v3" stroke="#60d040" stroke-width="1" fill="none"/>
<path d="M202.5 1206v3 M262.5 1194v3 M186.5 1173v3 M256.5 1180v3 M262.5 1195v3 M266.5 1190v3 M281.5 1193v3 M374.5 1182v3 M134.5 1188v3 M166.5 1189v3 M194.5 1203v3 M260.5 1192v3 M279.5 1200v3 M343.5 1200v3 M370.5 1168v3 M375.5 1172v3 M385.5 1170v3 M156.5 1187v3 M194.5 1203v3 M322.5 1196v3 M345.5 1204v3" stroke="#c8d020" stroke-width="1" fill="none"/>
</svg></body></html>
